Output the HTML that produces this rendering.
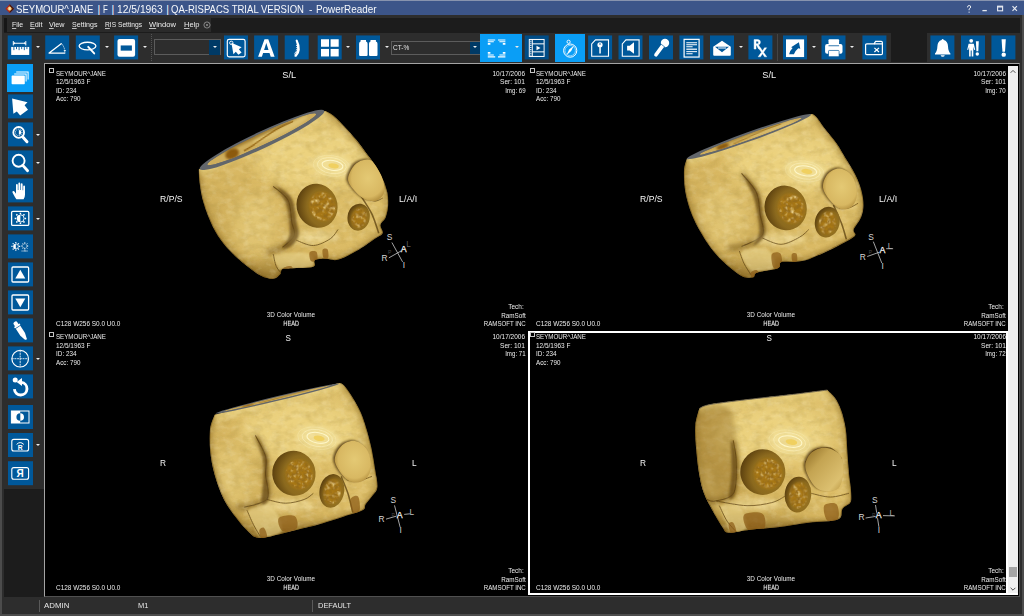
<!DOCTYPE html>
<html><head><meta charset="utf-8">
<style>
*{box-sizing:border-box;margin:0;padding:0}
html,body{width:1024px;height:616px;overflow:hidden;background:#2d2d2d;font-family:"Liberation Sans",sans-serif;}
.abs{position:absolute}
.tx{position:absolute;white-space:nowrap}
.tx u{text-decoration:underline;text-underline-offset:0.8px;text-decoration-thickness:0.6px;text-decoration-color:#bdbdbd}
.sx{display:inline-block;transform-origin:0 50%;white-space:nowrap}
#title{left:0;top:0;width:1024px;height:15px;background:#3c5589;border-top:1px solid #8793ae;}
#title .t{position:absolute;left:16px;top:0.5px;font-size:10.3px;color:#f4f6fa;white-space:nowrap;line-height:13px;transform-origin:0 50%;transform:scaleX(0.957)}
.mi{position:absolute;top:18.7px;font-size:7.6px;color:#e8e8e8;line-height:10px;white-space:nowrap;transform-origin:0 50%}
.mi u{text-decoration:underline;text-underline-offset:0.6px;text-decoration-thickness:0.7px}
.tb{position:absolute;left:0;top:0;width:24.4px;height:24.4px;background:#00589a;overflow:hidden}
.sb{position:absolute;left:0;top:0;width:24.5px;height:24.3px;background:#00589a;overflow:hidden}
.dd{position:absolute;width:0;height:0;border-left:2px solid transparent;border-right:2px solid transparent;border-top:2.4px solid #ececec}
.tb svg,.sb svg{position:absolute;left:0;top:0;width:24.5px;height:24px}
.vt{position:absolute;font-size:6.25px;line-height:8.6px;color:#e8e8e8;white-space:nowrap}
.vt.r{text-align:right}
.vt.c{text-align:center}
.sq{position:absolute;width:5px;height:5px;border:1px solid #c4c4c4}
.ori{position:absolute;font-size:8.6px;color:#f2f2f2;line-height:10px;white-space:nowrap}
.st{position:absolute;top:601.3px;font-size:7.9px;color:#e4e4e4;line-height:10px}
.cube{position:absolute;font-size:8px;color:#e8e8e8}
</style></head><body>
<div id="title" class="abs"></div>

<div class="tx" style="left:16.1px;transform-origin:0 50%;top:3.51px;font-size:10.5px;line-height:10.5px;color:#f6f8fb;transform:scaleX(0.911);">SEYMOUR^JANE</div>
<div class="tx" style="left:97.6px;transform-origin:0 50%;top:3.51px;font-size:10.5px;line-height:10.5px;color:#f6f8fb;transform:scaleX(1.000);">|</div>
<div class="tx" style="left:103px;transform-origin:0 50%;top:3.51px;font-size:10.5px;line-height:10.5px;color:#f6f8fb;transform:scaleX(0.748);">F</div>
<div class="tx" style="left:111.4px;transform-origin:0 50%;top:3.51px;font-size:10.5px;line-height:10.5px;color:#f6f8fb;transform:scaleX(1.000);">|</div>
<div class="tx" style="left:116.7px;transform-origin:0 50%;top:3.51px;font-size:10.5px;line-height:10.5px;color:#f6f8fb;transform:scaleX(0.980);">12/5/1963</div>
<div class="tx" style="left:166.2px;transform-origin:0 50%;top:3.51px;font-size:10.5px;line-height:10.5px;color:#f6f8fb;transform:scaleX(1.000);">|</div>
<div class="tx" style="left:171.2px;transform-origin:0 50%;top:3.51px;font-size:10.5px;line-height:10.5px;color:#f6f8fb;transform:scaleX(0.909);">QA-RISPACS TRIAL VERSION</div>
<div class="tx" style="left:308.6px;transform-origin:0 50%;top:3.51px;font-size:10.5px;line-height:10.5px;color:#f6f8fb;transform:scaleX(0.972);">-</div>
<div class="tx" style="left:315.5px;transform-origin:0 50%;top:3.51px;font-size:10.5px;line-height:10.5px;color:#f6f8fb;transform:scaleX(0.942);">PowerReader</div>

<svg class="abs" style="left:5.400px;top:3.600px" width="9.400" height="9.400" viewBox="0 0 12 12"><path d="M6 .4L11.600 6 6 11.600.4 6z" fill="#b3261a"/><path d="M6 .4L11.600 6 6 11.600z" fill="#3a1410"/><path d="M6 2.400L9.400 6 6 9.600 2.600 6z" fill="#e08a30"/><path d="M4.400 4h3v3.600h-3z" fill="#f6e2b0"/></svg>
<svg class="abs" style="left:960px;top:2px" width="62" height="13" viewBox="0 0 62 13"><g fill="none" stroke="#e6e9f0" stroke-width="1">
<path d="M7.500 5.400q0-1.900 1.600-1.900t1.600 1.500q0 1-1.600 2v1.200M9.100 9.600v1.200"/>
<path d="M22.400 8.600h4.400" stroke-width="1.300"/><rect x="37.600" y="4.200" width="5" height="4.600" stroke-width="1.100"/><path d="M37.600 4.800h5" stroke-width="1.400"/>
<path d="M52.500 4.200l4.400 4.600M56.900 4.200l-4.400 4.600" stroke-width="1.200"/></g></svg>
<div class="abs" style="left:0;top:15px;width:1.500px;height:601px;background:#4c4c4c"></div>
<div class="abs" style="left:1022px;top:15px;width:2px;height:601px;background:#4c4c4c"></div>
<div class="abs" style="left:0;top:613.500px;width:1024px;height:2.500px;background:#4c4c4c"></div>
<div class="abs" style="left:4px;top:17.500px;width:1016px;height:15px;background:#1c1c1c"></div>
<div class="abs" style="left:891px;top:32px;width:35.500px;height:30px;background:#1c1c1c"></div>
<div class="abs" style="left:7px;top:17.500px;width:204px;height:14.500px;background:#2a2a2a"></div>
<div class="abs" style="left:4px;top:18px;width:2.500px;height:14px;background:#161616"></div>

<div class="tx" style="left:12px;transform-origin:0 50%;top:21.10px;font-size:7.8px;line-height:7.8px;color:#ececec;transform:scaleX(0.891);"><u>F</u>ile</div>
<div class="tx" style="left:30px;transform-origin:0 50%;top:21.10px;font-size:7.8px;line-height:7.8px;color:#ececec;transform:scaleX(0.930);"><u>E</u>dit</div>
<div class="tx" style="left:49px;transform-origin:0 50%;top:21.10px;font-size:7.8px;line-height:7.8px;color:#ececec;transform:scaleX(0.925);"><u>V</u>iew</div>
<div class="tx" style="left:72px;transform-origin:0 50%;top:21.10px;font-size:7.8px;line-height:7.8px;color:#ececec;transform:scaleX(0.905);"><u>S</u>ettings</div>
<div class="tx" style="left:105px;transform-origin:0 50%;top:21.10px;font-size:7.8px;line-height:7.8px;color:#ececec;transform:scaleX(0.853);"><u>R</u>IS Settings</div>
<div class="tx" style="left:149px;transform-origin:0 50%;top:21.10px;font-size:7.8px;line-height:7.8px;color:#ececec;transform:scaleX(0.973);"><u>W</u>indow</div>
<div class="tx" style="left:183.5px;transform-origin:0 50%;top:21.10px;font-size:7.8px;line-height:7.8px;color:#ececec;transform:scaleX(0.966);"><u>H</u>elp</div>
<svg class="abs" style="left:203px;top:20.500px" width="8" height="8" viewBox="0 0 8 8"><circle cx="4" cy="4" r="3.100" fill="none" stroke="#9a9a9a" stroke-width="0.800"/><path d="M2.800 2.800l2.400 2.400M5.200 2.800L2.800 5.200" stroke="#9a9a9a" stroke-width="0.700"/></svg>
<div class="tb" style="transform:translate(7.7px,35.45px)"><svg viewBox="0 0 24.500 24"><path d="M5.6 5.6v4.4M18.1 5.6v4.4M5.6 7.8H18.1" stroke="#fff" stroke-width="1" fill="none"/>
<path d="M7.2 6.6L5.8 7.8l1.4 1.2zM16.5 6.6l1.4 1.2-1.4 1.2z" fill="#fff"/>
<rect x="3.5" y="11.5" width="18" height="8" fill="#fff"/>
<path d="M6.2 11.5v3.2M8.8 11.5v2.2M11.4 11.5v3.2M14 11.5v2.2M16.6 11.5v3.2M19.2 11.5v2.2" stroke="#00589a" stroke-width="0.9"/></svg></div>
<div class="dd" style="left:35.5px;top:45.8px"></div>
<div class="tb" style="transform:translate(45.2px,35.45px)"><svg viewBox="0 0 24.500 24"><path d="M3.9 17.6L16 8.2M3.9 17.6H19.6" stroke="#fff" stroke-width="1.3" fill="none" stroke-linecap="round"/>
<path d="M16.3 8.3Q19.6 11.5 19.7 17" stroke="#fff" stroke-width="1" fill="none" stroke-dasharray="1.2 1.1"/>
<path d="M18.3 14.8h2.6l-1.3 1.8z" fill="#fff"/></svg></div>
<div class="tb" style="transform:translate(75.8px,35.45px)"><svg viewBox="0 0 24.500 24"><ellipse cx="11.7" cy="10.6" rx="8.4" ry="3.8" fill="none" stroke="#fff" stroke-width="1.3"/>
<path d="M12.4 11.4L18.4 18" stroke="#fff" stroke-width="1.9" stroke-linecap="round"/></svg></div>
<div class="dd" style="left:104.5px;top:45.8px"></div>
<div class="tb" style="transform:translate(114.1px,35.45px)"><svg viewBox="0 0 24.500 24"><rect x="3.4" y="3.6" width="17.6" height="17.6" rx="2" fill="#fff"/><rect x="6.6" y="10" width="11.2" height="5.2" fill="#00589a"/></svg></div>
<div class="dd" style="left:142.8px;top:45.8px"></div>
<div class="abs" style="left:151.300px;top:34px;width:0;height:27px;border-left:1px dotted #555"></div>
<div class="abs" style="left:153.800px;top:39.200px;width:66.800px;height:16.300px;border:1px solid #5c5c5c;background:#2d2d2d"></div>
<div class="abs" style="left:209.200px;top:40px;width:10.800px;height:14.800px;background:#003a66"></div>
<div class="dd" style="left:213px;top:46.099999999999994px"></div>
<div class="tb" style="transform:translate(224px,35.45px)"><svg viewBox="0 0 24.500 24"><rect x="3.3" y="4" width="17.8" height="17.4" rx="1.8" fill="none" stroke="#fff" stroke-width="1.2"/>
<path d="M7.4 7.2L17.6 11.8 14.8 13.8 17.6 17 14.4 19.4 11.8 16.2 9.4 18.8z" fill="#fff"/>
<circle cx="7.3" cy="7.4" r="1.7" fill="none" stroke="#fff" stroke-width="0.9"/></svg></div>
<div class="tb" style="transform:translate(254.1px,35.45px)"><svg viewBox="0 0 24.500 24"><path d="M4 21.2L10.4 3.8h3.8L20.5 21.2h-3.9l-1.2-3.7H9l-1.2 3.7zM10 14.5h4.4l-2.2-6.9z" fill="#fff" fill-rule="evenodd"/></svg></div>
<div class="tb" style="transform:translate(284.7px,35.45px)"><svg viewBox="0 0 24.500 24"><path d="M11.4 4.2q1-.6 1.5.4 2.6 5.4 2.2 9.600-.4 4-3 6.600-.8.800-1.800.400l-.8-.7q2.600-2.600 3-6.300.400-4.200-1.600-9.200z" fill="#fff"/>
<path d="M13.4 9.600l-2 .5M13.800 11.600l-2.200.5M13.900 13.600l-2.400.4M13.600 15.600l-2.600.2M13 17.400l-2.800-.2M12 19l-2.600-.6" stroke="#fff" stroke-width="0.9"/></svg></div>
<div class="tb" style="transform:translate(317.7px,35.45px)"><svg viewBox="0 0 24.500 24"><rect x="3.3" y="3.8" width="8" height="7.5" fill="#fff"/><rect x="12.9" y="3.8" width="8.1" height="7.5" fill="#fff"/><rect x="3.3" y="13.5" width="8" height="7.5" fill="#fff"/><rect x="12.9" y="13.5" width="8.1" height="7.5" fill="#fff"/></svg></div>
<div class="dd" style="left:346.4px;top:45.8px"></div>
<div class="tb" style="transform:translate(356px,35.45px)"><svg viewBox="0 0 24.500 24"><path d="M4.6 4.5h5.4v1.6q1.6.6 1.6 2.2v11.2q0 1.1-1.1 1.1H4.2q-1.1 0-1.1-1.1V8.3q0-1.6 1.5-2.2z" fill="#fff"/>
<path d="M14.5 4.5h5.4v1.6q1.6.6 1.6 2.2v11.2q0 1.1-1.1 1.1h-6.3q-1.1 0-1.1-1.1V8.3q0-1.6 1.5-2.2z" fill="#fff"/></svg></div>
<div class="dd" style="left:384.6px;top:45.8px"></div>
<div class="abs" style="left:391.200px;top:40.800px;width:88.600px;height:14px;border:1px solid #5c5c5c;background:#2d2d2d"></div>
<div class="abs" style="left:470px;top:41.500px;width:9.600px;height:12.600px;background:#003a66"></div>
<div class="dd" style="left:473px;top:46.099999999999994px"></div>
<div class="tx" style="left:393.3px;transform-origin:0 50%;top:44.04px;font-size:7.4px;line-height:7.4px;color:#e4e4e4;transform:scaleX(0.881);">CT-%</div>
<div class="abs" style="left:480px;top:33.600px;width:42px;height:28.200px;background:#0a9ef6"><svg style="position:absolute;left:0;top:0" width="42" height="28.200" viewBox="0 0 42 28.200"><g fill="#fff"><path d="M7.8 5.4h7.4v1.1H7.8zM7.8 7.2h6v1.1h-6zM7.8 9h2.6v1.8H7.8z"/>
<path d="M25.4 5.4H18v1.1h7.4zM25.4 7.2h-6v1.1h6zM25.4 9h-2.6v1.8h2.6z"/>
<path d="M7.8 23.4h7.4v-1.1H7.8zM7.8 21.6h6v-1.1h-6zM7.8 19.8h2.6V18H7.8z"/>
<path d="M25.4 23.4H18v-1.1h7.4zM25.4 21.6h-6v-1.1h6zM25.4 19.8h-2.6V18h2.6z"/></g></svg></div>
<div class="dd" style="left:515px;top:46.099999999999994px"></div>
<div class="tb" style="transform:translate(524.7px,35.45px);background:#004c86"><svg viewBox="0 0 24.500 24"><rect x="4.6" y="4" width="14.8" height="17" fill="none" stroke="#fff" stroke-width="1"/>
<path d="M7.6 4v17M7.6 8.4h11.8M7.6 16.4h11.8" stroke="#fff" stroke-width="1" fill="none"/>
<path d="M6.1 5.2v15" stroke="#fff" stroke-width="1.2" stroke-dasharray="1.1 1"/>
<path d="M11.8 10.3l4 2.2-4 2.2z" fill="#fff"/></svg></div>
<div class="abs" style="left:554.600px;top:33.600px;width:30.400px;height:28.200px;background:#0a9ef6"><svg style="position:absolute;left:0;top:0" width="30.400" height="28.200" viewBox="0 0 30.400 28.200"><circle cx="15.2" cy="16.6" r="6.6" fill="none" stroke="#fff" stroke-width="1"/>
<circle cx="15.2" cy="16.6" r="5.2" fill="none" stroke="#fff" stroke-width="0.5"/>
<circle cx="13.6" cy="7.8" r="1.6" fill="none" stroke="#fff" stroke-width="0.9"/>
<path d="M11.4 21.2l2.8-5.6 4.8-4.2-2.8 5.6z" fill="#fff"/></svg></div>
<div class="tb" style="transform:translate(588.1px,35.45px)"><svg viewBox="0 0 24.500 24"><path d="M7.4 4.4H20.4V20.8H3.6V8.4z" fill="none" stroke="#fff" stroke-width="1.1"/>
<circle cx="11.9" cy="9.3" r="2.6" fill="#fff"/><circle cx="11.9" cy="8.6" r="0.8" fill="#00589a"/>
<path d="M11.2 11h1.5v7h-1.5z" fill="#fff"/></svg></div>
<div class="tb" style="transform:translate(618.5px,35.45px)"><svg viewBox="0 0 24.500 24"><path d="M7.4 4.4H20.6V20.8H3.8V8.4z" fill="none" stroke="#fff" stroke-width="1.1"/>
<path d="M8.6 10.2h2.6l4.3-3.4v11.6l-4.3-3.4H8.6z" fill="#fff"/></svg></div>
<div class="tb" style="transform:translate(649px,35.45px)"><svg viewBox="0 0 24.500 24"><path d="M14.3 9.4L7 19.300" stroke="#fff" stroke-width="3.700" stroke-linecap="round"/><circle cx="16" cy="7.600" r="4.200" fill="#fff"/>
<path d="M11.800 8.400l4.200 3.400" stroke="#00589a" stroke-width="0.700"/></svg></div>
<div class="tb" style="transform:translate(679.4px,35.45px)"><svg viewBox="0 0 24.500 24"><rect x="4.700" y="3.900" width="15" height="17.700" fill="none" stroke="#fff" stroke-width="1.200"/>
<path d="M6.900 7.300h10.700M6.900 9.300h10.700M6.900 11.300h6.300M6.900 16.200h10.700M6.900 18.300h6.300" stroke="#fff" stroke-width="1"/><path d="M6.900 13.800h10.700" stroke="#cfe0ee" stroke-width="1.500"/></svg></div>
<div class="tb" style="transform:translate(710px,35.45px)"><svg viewBox="0 0 24.500 24"><path d="M3.200 11.300L12 5.200l8.800 6.100v8q0 1-1 1H4.200q-1 0-1-1z" fill="#fff"/>
<path d="M5 11.400h14l-7 5.300z" fill="#00589a"/><rect x="8" y="11.800" width="8" height="1.500" fill="#a9c8e2"/></svg></div>
<div class="dd" style="left:738.6px;top:45.8px"></div>
<div class="tb" style="transform:translate(748.4px,35.45px)"><svg viewBox="0 0 24.500 24"><path d="M5.700 13.600V4.100h3.500q2.800 0 2.800 2.700 0 2.100-2 2.600l2.500 4.200h-2.200l-2.200-3.900h-.5v3.900zM7.600 5.700v2.500h1.500q1 0 1-1.250t-1-1.250z" fill="#fff" fill-rule="evenodd" stroke="#fff" stroke-width="0.45"/>
<path d="M9.900 12.300h2.200l2 3 2-3h2.200l-3.100 4.500 3.200 4.600h-2.300l-2-3.100-2 3.100H9.700l3.300-4.600z" fill="#fff" stroke="#fff" stroke-width="0.35"/></svg></div>
<div class="abs" style="left:777.200px;top:34px;width:1.200px;height:27px;background:#444"></div>
<div class="tb" style="transform:translate(783px,35.45px)"><svg viewBox="0 0 24.500 24"><rect x="3" y="3.900" width="18.100" height="17.700" fill="#fff"/>
<path d="M6.100 18.700Q7.400 14.600 9.600 12.600L8.100 11.700 15.900 6.800 17.300 13.400 15.300 12.900Q12.600 15 10.900 18.700z" fill="#00589a"/></svg></div>
<div class="dd" style="left:811.8px;top:45.8px"></div>
<div class="tb" style="transform:translate(821.5px,35.45px)"><svg viewBox="0 0 24.500 24"><rect x="7" y="3.8" width="10.6" height="5" rx="1" fill="#fff"/>
<rect x="3.6" y="8.6" width="17.4" height="9.6" rx="2" fill="#fff"/>
<rect x="7" y="15" width="10.6" height="6.2" rx="0.8" fill="#fff" stroke="#00589a" stroke-width="0.7"/>
<path d="M7 10.3h10.6" stroke="#00589a" stroke-width="0.8"/></svg></div>
<div class="dd" style="left:850.2px;top:45.8px"></div>
<div class="tb" style="transform:translate(862.4px,35.45px)"><svg viewBox="0 0 24.500 24"><path d="M4.4 8.4H11.6l1.6-2.4h5.6q1.2 0 1.2 1.2V18q0 1.2-1.2 1.2H4.4q-1.2 0-1.2-1.2V9.6q0-1.2 1.2-1.2z" fill="none" stroke="#fff" stroke-width="1.2"/>
<path d="M11.6 8.4H20" stroke="#fff" stroke-width="1.1"/>
<path d="M12 12.4l4.6 4.2M16.6 12.4L12 16.6" stroke="#fff" stroke-width="1.2"/></svg></div>
<div class="tb" style="transform:translate(930.4px,35.45px)"><svg viewBox="0 0 24.500 24"><path d="M12.2 3.6q.9 0 1.2 1 4 1.2 4.2 6.2.2 5 2.4 7.2v1H4.6v-1q2.2-2.2 2.4-7.2.2-5 4.2-6.2.3-1 1-1z" fill="#fff"/>
<path d="M10.2 19.8h4.2q-.4 1.6-2.1 1.6t-2.1-1.6z" fill="#fff"/></svg></div>
<div class="tb" style="transform:translate(961px,35.45px)"><svg viewBox="0 0 24.500 24"><circle cx="10.2" cy="5.4" r="1.9" fill="#fff"/>
<path d="M7.6 8.2h5.2l1.4 6-1 .4-.9-3.2V21h-1.6v-6h-1v6H8.1v-9.6l-.9 3.2-1-.4z" fill="#fff"/>
<path d="M14.9 5.8h2.9l-.5 10h-1.9z" fill="#fff"/><circle cx="16.3" cy="18.6" r="1.7" fill="#fff"/></svg></div>
<div class="tb" style="transform:translate(991.4px,35.45px)"><svg viewBox="0 0 24.500 24"><path d="M10.2 3.8h4.2l-.8 12.4h-2.6z" fill="#fff"/><circle cx="12.3" cy="19.2" r="2.2" fill="#fff"/></svg></div>
<div class="abs" style="left:7.200px;top:64.200px;width:25.800px;height:28px;background:#0a9ef6"><svg style="position:absolute;left:0.600px;top:2px" width="24.500" height="24" viewBox="0 0 24.500 24"><g fill="#fff"><path d="M8.2 5.4H20.6V13.6H19.6V6.4H8.2z"/><path d="M6.2 7.4H18.6V15.6H17.6V8.4H6.2z"/><rect x="3.6" y="9.6" width="13.2" height="8.6" rx="0.8"/></g></svg></div>
<div class="sb" style="transform:translate(8px,94.4px)"><svg viewBox="0 0 24.500 24"><path d="M4.100 4.100L19.500 7.800 16.600 10.800 20 15.400 12.200 21.200 8.800 17 5.400 19.300z" fill="#fff"/></svg></div>
<div class="sb" style="transform:translate(8px,122.4px)"><svg viewBox="0 0 24.500 24"><circle cx="10.700" cy="10" r="5.400" fill="none" stroke="#fff" stroke-width="1.800"/>
<path d="M15 14.800l4 4.600" stroke="#fff" stroke-width="2.900" stroke-linecap="round"/>
<path d="M10.900 7.600a2.400 2.400 0 0 1 0 4.800z" fill="#fff"/><circle cx="10.700" cy="10" r="3.300" fill="none" stroke="#fff" stroke-width="0.900" stroke-dasharray="0.900 0.900"/></svg></div>
<div class="dd" style="left:35.5px;top:133.50000000000003px"></div>
<div class="sb" style="transform:translate(8px,150.4px)"><svg viewBox="0 0 24.500 24"><circle cx="10.6" cy="10.4" r="6" fill="none" stroke="#fff" stroke-width="1.9"/>
<path d="M14.8 15l4.8 5.4" stroke="#fff" stroke-width="2.8" stroke-linecap="round"/></svg></div>
<div class="dd" style="left:35.5px;top:161.50000000000003px"></div>
<div class="sb" style="transform:translate(8px,178.4px)"><svg viewBox="0 0 24.500 24"><path d="M8.4 20.8q-1.6-2-3.8-6.4-.6-1.4.4-1.8 1-.3 1.8 1l1.2 1.8V6.6q0-1 .9-1t.9 1v5h.6V5q0-1 .9-1t.9 1v6.6h.6V5.8q0-1 .9-1t.9 1v6h.6V8q0-1 .9-1t.9 1v8.4q0 2.400-1.400 4.400z" fill="#fff"/></svg></div>
<div class="sb" style="transform:translate(8px,206.4px)"><svg viewBox="0 0 24.500 24"><rect x="3.600" y="5" width="17.200" height="14" rx="1.200" fill="none" stroke="#fff" stroke-width="1.300"/>
<path d="M12.400 8.300a3.700 3.700 0 0 0 0 7.400z" fill="#fff"/><path d="M12.400 8.300a3.700 3.700 0 0 1 0 7.400" fill="none" stroke="#fff" stroke-width="0.900"/>
<path d="M12.400 6.300v1.500M12.400 16.200v1.500M6.700 12h1.500M16.600 12h1.500M8.300 7.900l1.100 1.100M15.400 15l1.100 1.100M16.500 7.900l-1.100 1.100M9.400 15l-1.100 1.100" stroke="#fff" stroke-width="1.500"/></svg></div>
<div class="dd" style="left:35.5px;top:217.50000000000003px"></div>
<div class="sb" style="transform:translate(8px,234.4px)"><svg viewBox="0 0 24.500 24"><path d="M7.800 9.400a2.600 2.600 0 0 0 0 5.200z" fill="#fff"/><path d="M7.800 9.400a2.600 2.600 0 0 1 0 5.200" fill="none" stroke="#fff" stroke-width="0.800"/>
<path d="M7.800 7.600v1.200M7.800 15.200v1.200M3.400 12h1.200M11 12h1.200M4.700 8.900l.9.900M10 14.200l.9.900M10.900 8.900l-.9.900M5.600 14.200l-.9.900" stroke="#fff" stroke-width="1.200"/>
<circle cx="16.800" cy="11.600" r="2.300" fill="none" stroke="#fff" stroke-width="1" stroke-dasharray="0.900 0.600"/><path d="M16.800 7.600v1M13.200 11.600h1M19.400 11.600h1M14.200 9l.7.700M19.400 9l-.7.700M14.200 14.200l.7-.7M19.400 14.200l-.7-.7M16.800 14v2.400M13.600 16.600h6.400" stroke="#fff" stroke-width="0.900" stroke-dasharray="0.800 0.400"/></svg></div>
<div class="sb" style="transform:translate(8px,262.4px)"><svg viewBox="0 0 24.500 24"><rect x="4" y="4.600" width="16.600" height="15" rx="1" fill="none" stroke="#fff" stroke-width="1.300"/><path d="M12.300 7.400l5 8.800h-10z" fill="#fff"/></svg></div>
<div class="sb" style="transform:translate(8px,290.4px)"><svg viewBox="0 0 24.500 24"><rect x="4" y="4.600" width="16.600" height="15" rx="1" fill="none" stroke="#fff" stroke-width="1.300"/><path d="M12.300 16.800l5-8.800h-10z" fill="#fff"/></svg></div>
<div class="sb" style="transform:translate(8px,318.4px)"><svg viewBox="0 0 24.500 24"><g transform="translate(12.500 12.600) rotate(-33)" fill="#fff"><rect x="-2.100" y="-10.800" width="4.200" height="4.400" rx="1.500"/><rect x="-3.300" y="-7" width="6.600" height="1.900" rx=".5"/><path d="M-2.700 -4.500h5.400v8.400l-1.500 5.600-1.200 1.300-1.200-1.300-1.500-5.600z"/></g></svg></div>
<div class="sb" style="transform:translate(8px,346.4px)"><svg viewBox="0 0 24.500 24"><circle cx="12.200" cy="12.300" r="8.300" fill="none" stroke="#fff" stroke-width="1.200"/><path d="M12.200 3.800v17M3.700 12.300h17" stroke="#cfe0ee" stroke-width="1" stroke-dasharray="2 0.700"/></svg></div>
<div class="dd" style="left:35.5px;top:357.5px"></div>
<div class="sb" style="transform:translate(8px,374.4px)"><svg viewBox="0 0 24.500 24"><path d="M6.400 14.800A6.300 6.300 0 1 0 13.400 8" fill="none" stroke="#fff" stroke-width="2.900"/><path d="M14 3.600v8L8.600 7.600z" fill="#fff"/><circle cx="7.200" cy="5.700" r="2.500" fill="#fff"/></svg></div>
<div class="sb" style="transform:translate(8px,405px)"><svg viewBox="0 0 24.500 24"><rect x="3.400" y="6" width="17.600" height="12" fill="none" stroke="#fff" stroke-width="1"/><rect x="3.400" y="6" width="8.800" height="12" fill="#fff"/>
<path d="M12.200 8.200a3.800 3.800 0 0 1 0 7.600z" fill="#fff"/><path d="M12.200 8.200a3.800 3.800 0 0 0 0 7.600z" fill="#00589a"/></svg></div>
<div class="sb" style="transform:translate(8px,433px)"><svg viewBox="0 0 24.500 24"><rect x="3.800" y="6.400" width="16.800" height="11.600" rx="2" fill="none" stroke="#fff" stroke-width="1.100"/>
<path d="M8.600 11.400q3.600-3.600 7.200 0" fill="none" stroke="#fff" stroke-width="1"/>
<text x="9.700" y="17.200" font-family="Liberation Sans" font-weight="bold" font-size="6.800" fill="#fff">R</text></svg></div>
<div class="dd" style="left:35.5px;top:444.1px"></div>
<div class="sb" style="transform:translate(8px,461.2px)"><svg viewBox="0 0 24.500 24"><rect x="3.800" y="6.400" width="16.800" height="11.600" rx="2" fill="none" stroke="#fff" stroke-width="1.100"/>
<text x="8.600" y="16" font-family="Liberation Sans" font-weight="bold" font-size="10" fill="#fff">Я</text></svg></div>
<div class="abs" style="left:4px;top:488.500px;width:39.500px;height:108px;background:#1c1c1c"></div>
<div class="abs" style="left:44px;top:62.900px;width:976.200px;height:534px;background:#000;border:1.500px solid #a4a4a4;border-bottom:1px solid #505050;border-right:1px solid #505050"></div>
<svg class="abs" style="left:0;top:0" width="1024" height="616" viewBox="0 0 1024 616">
<defs>
<linearGradient id="gbody" x1="0" y1="1" x2="1" y2="0"><stop offset="0" stop-color="#c6a450"/><stop offset=".5" stop-color="#dcbc66"/><stop offset="1" stop-color="#e0c470"/></linearGradient>
<radialGradient id="gsock" cx=".68" cy=".6" r=".75"><stop offset="0" stop-color="#9c7824"/><stop offset=".6" stop-color="#8c6a1e"/><stop offset="1" stop-color="#52380c"/></radialGradient>
<radialGradient id="geyeR" cx=".55" cy=".45" r=".6"><stop offset="0" stop-color="#e4c974"/><stop offset=".75" stop-color="#d8b862"/><stop offset="1" stop-color="#b08c3c"/></radialGradient>
<linearGradient id="geyeR2" x1="0" y1="0" x2="1" y2="1"><stop offset="0" stop-color="#8c6a22"/><stop offset=".35" stop-color="#c4a452"/><stop offset=".8" stop-color="#dcc070"/><stop offset="1" stop-color="#b8943e"/></linearGradient>
<filter id="tex" x="0" y="0" width="100%" height="100%"><feTurbulence type="fractalNoise" baseFrequency="0.075" numOctaves="2" seed="7" result="n"/><feColorMatrix in="n" type="matrix" values="0 0 0 0 0.90  0 0 0 0 0.72  0 0 0 0 0.32  3.4 0 0 0 -1.75" result="c"/><feTurbulence type="fractalNoise" baseFrequency="0.09" numOctaves="2" seed="21" result="n2"/><feColorMatrix in="n2" type="matrix" values="0 0 0 0 0.30  0 0 0 0 0.15  0 0 0 0 0.01  0 3.6 0 0 -1.45" result="d"/><feMerge result="m"><feMergeNode in="c"/><feMergeNode in="d"/></feMerge><feComposite in="m" in2="SourceGraphic" operator="in"/></filter>
<filter id="mot" x="0" y="0" width="100%" height="100%"><feTurbulence type="fractalNoise" baseFrequency="0.03 0.045" numOctaves="3" seed="11" result="n"/><feColorMatrix in="n" type="matrix" values="0 0 0 0 0.42  0 0 0 0 0.29  0 0 0 0 0.06  0 0 2.2 0 -0.95"/></filter>
<filter id="mot2" x="0" y="0" width="100%" height="100%"><feTurbulence type="fractalNoise" baseFrequency="0.035 0.05" numOctaves="3" seed="5" result="n"/><feColorMatrix in="n" type="matrix" values="0 0 0 0 0.98  0 0 0 0 0.92  0 0 0 0 0.68  0 2.2 0 0 -1.0"/></filter>
<filter id="bl20" x="-50%" y="-50%" width="200%" height="200%"><feGaussianBlur stdDeviation="22"/></filter>
<filter id="bl14" x="-50%" y="-50%" width="200%" height="200%"><feGaussianBlur stdDeviation="14"/></filter>
<filter id="bl8" x="-50%" y="-50%" width="200%" height="200%"><feGaussianBlur stdDeviation="8"/></filter>
<filter id="bl4" x="-50%" y="-50%" width="200%" height="200%"><feGaussianBlur stdDeviation="4"/></filter>
<filter id="bl2" x="-50%" y="-50%" width="200%" height="200%"><feGaussianBlur stdDeviation="1.6"/></filter>
</defs>
<g transform="translate(190,100) scale(0.30836)">
<defs><clipPath id="cpa"><path d="M28.0 225.0C28.3 230.8 28.0 244.2 30.0 260.0C32.0 275.8 35.0 300.0 40.0 320.0C45.0 340.0 51.7 360.0 60.0 380.0C68.3 400.0 78.3 421.7 90.0 440.0C101.7 458.3 115.0 474.2 130.0 490.0C145.0 505.8 163.3 521.7 180.0 535.0C196.7 548.3 215.0 562.5 230.0 570.0C245.0 577.5 259.7 580.7 270.0 580.0C280.3 579.3 287.0 571.3 292.0 566.0C297.0 560.7 293.7 551.3 300.0 548.0C306.3 544.7 313.3 547.2 330.0 546.0C346.7 544.8 387.5 545.3 400.0 541.0C412.5 536.7 398.3 524.3 405.0 520.0C411.7 515.7 427.5 515.3 440.0 515.0C452.5 514.7 463.3 522.2 480.0 518.0C496.7 513.8 520.0 501.3 540.0 490.0C560.0 478.7 585.8 459.7 600.0 450.0C614.2 440.3 622.0 439.5 625.0 432.0C628.0 424.5 616.3 413.7 618.0 405.0C619.7 396.3 630.8 390.8 635.0 380.0C639.2 369.2 642.2 353.3 643.0 340.0C643.8 326.7 643.0 314.2 640.0 300.0C637.0 285.8 631.7 270.0 625.0 255.0C618.3 240.0 609.2 224.2 600.0 210.0C590.8 195.8 580.0 183.3 570.0 170.0C560.0 156.7 551.7 144.2 540.0 130.0C528.3 115.8 512.5 98.3 500.0 85.0C487.5 71.7 475.3 58.3 465.0 50.0C454.7 41.7 442.5 37.5 438.0 35.0z"/></clipPath></defs>
<g clip-path="url(#cpa)">
<path d="M28.0 225.0C28.3 230.8 28.0 244.2 30.0 260.0C32.0 275.8 35.0 300.0 40.0 320.0C45.0 340.0 51.7 360.0 60.0 380.0C68.3 400.0 78.3 421.7 90.0 440.0C101.7 458.3 115.0 474.2 130.0 490.0C145.0 505.8 163.3 521.7 180.0 535.0C196.7 548.3 215.0 562.5 230.0 570.0C245.0 577.5 259.7 580.7 270.0 580.0C280.3 579.3 287.0 571.3 292.0 566.0C297.0 560.7 293.7 551.3 300.0 548.0C306.3 544.7 313.3 547.2 330.0 546.0C346.7 544.8 387.5 545.3 400.0 541.0C412.5 536.7 398.3 524.3 405.0 520.0C411.7 515.7 427.5 515.3 440.0 515.0C452.5 514.7 463.3 522.2 480.0 518.0C496.7 513.8 520.0 501.3 540.0 490.0C560.0 478.7 585.8 459.7 600.0 450.0C614.2 440.3 622.0 439.5 625.0 432.0C628.0 424.5 616.3 413.7 618.0 405.0C619.7 396.3 630.8 390.8 635.0 380.0C639.2 369.2 642.2 353.3 643.0 340.0C643.8 326.7 643.0 314.2 640.0 300.0C637.0 285.8 631.7 270.0 625.0 255.0C618.3 240.0 609.2 224.2 600.0 210.0C590.8 195.8 580.0 183.3 570.0 170.0C560.0 156.7 551.7 144.2 540.0 130.0C528.3 115.8 512.5 98.3 500.0 85.0C487.5 71.7 475.3 58.3 465.0 50.0C454.7 41.7 442.5 37.5 438.0 35.0z" fill="url(#gbody)"/>
<ellipse cx="402" cy="192" rx="190" ry="100" fill="#f0d886" opacity=".75" filter="url(#bl20)"/>
<ellipse cx="210" cy="405" rx="75" ry="100" fill="#ead080" opacity=".6" filter="url(#bl20)"/>
<path d="M28.0 225.0C28.3 230.8 28.0 244.2 30.0 260.0C32.0 275.8 35.0 300.0 40.0 320.0C45.0 340.0 51.7 360.0 60.0 380.0C68.3 400.0 78.3 421.7 90.0 440.0C101.7 458.3 115.0 474.2 130.0 490.0C145.0 505.8 163.3 521.7 180.0 535.0C196.7 548.3 215.0 562.5 230.0 570.0C245.0 577.5 259.7 580.7 270.0 580.0C280.3 579.3 287.0 571.3 292.0 566.0C297.0 560.7 293.7 551.3 300.0 548.0C306.3 544.7 313.3 547.2 330.0 546.0C346.7 544.8 387.5 545.3 400.0 541.0C412.5 536.7 398.3 524.3 405.0 520.0C411.7 515.7 427.5 515.3 440.0 515.0C452.5 514.7 463.3 522.2 480.0 518.0C496.7 513.8 520.0 501.3 540.0 490.0C560.0 478.7 585.8 459.7 600.0 450.0C614.2 440.3 622.0 439.5 625.0 432.0C628.0 424.5 616.3 413.7 618.0 405.0C619.7 396.3 630.8 390.8 635.0 380.0C639.2 369.2 642.2 353.3 643.0 340.0C643.8 326.7 643.0 314.2 640.0 300.0C637.0 285.8 631.7 270.0 625.0 255.0C618.3 240.0 609.2 224.2 600.0 210.0C590.8 195.8 580.0 183.3 570.0 170.0C560.0 156.7 551.7 144.2 540.0 130.0C528.3 115.8 512.5 98.3 500.0 85.0C487.5 71.7 475.3 58.3 465.0 50.0C454.7 41.7 442.5 37.5 438.0 35.0z" fill="none" stroke="#7a5a18" stroke-width="20" opacity=".45" filter="url(#bl8)"/>
<path d="M28.0 225.0C28.3 230.8 28.0 244.2 30.0 260.0C32.0 275.8 35.0 300.0 40.0 320.0C45.0 340.0 51.7 360.0 60.0 380.0C68.3 400.0 78.3 421.7 90.0 440.0C101.7 458.3 115.0 474.2 130.0 490.0C145.0 505.8 163.3 521.7 180.0 535.0C196.7 548.3 215.0 562.5 230.0 570.0C245.0 577.5 259.7 580.7 270.0 580.0C280.3 579.3 287.0 571.3 292.0 566.0C297.0 560.7 293.7 551.3 300.0 548.0C306.3 544.7 313.3 547.2 330.0 546.0C346.7 544.8 387.5 545.3 400.0 541.0C412.5 536.7 398.3 524.3 405.0 520.0C411.7 515.7 427.5 515.3 440.0 515.0C452.5 514.7 463.3 522.2 480.0 518.0C496.7 513.8 520.0 501.3 540.0 490.0C560.0 478.7 585.8 459.7 600.0 450.0C614.2 440.3 622.0 439.5 625.0 432.0C628.0 424.5 616.3 413.7 618.0 405.0C619.7 396.3 630.8 390.8 635.0 380.0C639.2 369.2 642.2 353.3 643.0 340.0C643.8 326.7 643.0 314.2 640.0 300.0C637.0 285.8 631.7 270.0 625.0 255.0C618.3 240.0 609.2 224.2 600.0 210.0C590.8 195.8 580.0 183.3 570.0 170.0C560.0 156.7 551.7 144.2 540.0 130.0C528.3 115.8 512.5 98.3 500.0 85.0C487.5 71.7 475.3 58.3 465.0 50.0C454.7 41.7 442.5 37.5 438.0 35.0z" fill="none" stroke="#5a400e" stroke-width="6" opacity=".5" filter="url(#bl2)"/>
<path d="M438 35L28 225" fill="none" stroke="#e8cf7c" stroke-width="46" opacity=".95" filter="url(#bl8)"/>
<ellipse cx="275.5" cy="585" rx="256.25" ry="50" fill="#745418" opacity=".5" filter="url(#bl20)"/>
<path d="M270.0 280.0C278.0 287.5 308.0 305.8 318.0 325.0C328.0 344.2 326.7 375.8 330.0 395.0C333.3 414.2 343.0 426.2 338.0 440.0C333.0 453.8 314.7 468.8 300.0 478.0C285.3 487.2 258.3 492.2 250.0 495.0" fill="none" stroke="#6e5018" stroke-width="18" opacity=".6" filter="url(#bl8)"/>
<path d="M270.0 280.0C278.0 287.5 308.0 305.8 318.0 325.0C328.0 344.2 326.7 375.8 330.0 395.0C333.3 414.2 343.0 426.2 338.0 440.0C333.0 453.8 306.3 471.7 300.0 478.0" fill="none" stroke="#553a0c" stroke-width="3.5" opacity=".8" filter="url(#bl2)"/>
<ellipse cx="392" cy="445" rx="90" ry="20" fill="#f0dc98" opacity=".7" filter="url(#bl8)"/>
<rect x="18" y="25" width="635" height="565" filter="url(#mot)" opacity=".3"/>
<rect x="18" y="25" width="635" height="565" filter="url(#mot2)" opacity=".22"/>
<g transform="rotate(8 462 212)"><ellipse cx="462" cy="212" rx="64.6" ry="36.8" fill="#f6e8a8" opacity=".55" filter="url(#bl8)"/><ellipse cx="459" cy="214" rx="59.5" ry="33.6" fill="none" stroke="#fdf2bc" stroke-width="2" opacity=".45"/><ellipse cx="460" cy="213" rx="46.919999999999995" ry="25.6" fill="none" stroke="#fff6c8" stroke-width="2.400" opacity=".6"/><ellipse cx="462" cy="212" rx="34" ry="16" fill="none" stroke="#fff8cc" stroke-width="3.500" opacity=".9"/><ellipse cx="466" cy="213" rx="17.0" ry="8.0" fill="#f0d060"/></g>
<path d="M285.0 285.0C288.3 283.3 319.8 300.8 330.0 320.0C340.2 339.2 342.3 380.0 346.0 400.0C349.7 420.0 354.7 428.0 352.0 440.0C349.3 452.0 338.7 465.0 330.0 472.0C321.3 479.0 301.3 487.3 300.0 482.0C298.7 476.7 318.3 457.0 322.0 440.0C325.7 423.0 324.0 398.3 322.0 380.0C320.0 361.7 316.2 345.8 310.0 330.0C303.8 314.2 281.7 286.7 285.0 285.0z" fill="#664a12" opacity=".7" filter="url(#bl4)"/>
<path d="M270.0 505.0C277.5 497.5 310.0 495.8 330.0 495.0C350.0 494.2 379.2 492.5 390.0 500.0C400.8 507.5 410.0 532.0 395.0 540.0C380.0 548.0 318.3 548.0 300.0 548.0C281.7 548.0 290.0 547.2 285.0 540.0C280.0 532.8 262.5 512.5 270.0 505.0z" fill="#ecd890" opacity=".55" filter="url(#bl4)"/>
<path d="M555.0 312.0C560.8 321.7 580.5 350.0 590.0 370.0C599.5 390.0 608.3 421.7 612.0 432.0" fill="none" stroke="#5a3f0e" stroke-width="5" opacity=".75" filter="url(#bl2)"/>
<path d="M572.0 318.0C576.7 319.7 591.2 328.0 600.0 328.0C608.8 328.0 620.8 319.7 625.0 318.0" fill="none" stroke="#5a3f0e" stroke-width="3" opacity=".75" filter="url(#bl2)"/>
<path d="M270.0 500.0C271.7 506.7 275.0 529.0 280.0 540.0C285.0 551.0 296.7 561.7 300.0 566.0" fill="none" stroke="#5a3f0e" stroke-width="3" opacity=".75" filter="url(#bl2)"/>
<path d="M345.0 455.0C354.2 457.8 381.7 472.8 400.0 472.0C418.3 471.2 441.7 458.7 455.0 450.0C468.3 441.3 475.8 425.0 480.0 420.0" fill="none" stroke="#5a3f0e" stroke-width="3" opacity=".75" filter="url(#bl2)"/>
<path d="M300.0 548.0C304.2 541.3 324.2 535.5 330.0 540.0C335.8 544.5 339.2 568.3 335.0 575.0C330.8 581.7 310.8 584.5 305.0 580.0C299.2 575.5 295.8 554.7 300.0 548.0z" fill="#8a5a14" opacity=".7" filter="url(#bl2)"/>
<path d="M388.0 494.0C391.0 489.0 406.0 487.7 410.0 492.0C414.0 496.3 415.0 515.0 412.0 520.0C409.0 525.0 396.0 526.3 392.0 522.0C388.0 517.7 385.0 499.0 388.0 494.0z" fill="#8a5a14" opacity=".7" filter="url(#bl2)"/>
<path d="M430.0 486.0C432.0 481.0 443.0 479.7 446.0 484.0C449.0 488.3 450.0 507.0 448.0 512.0C446.0 517.0 437.0 518.3 434.0 514.0C431.0 509.7 428.0 491.0 430.0 486.0z" fill="#8a5a14" opacity=".7" filter="url(#bl2)"/>
<path d="M515.0 268.0C508.7 253.0 516.5 239.3 522.0 228.0C527.5 216.7 537.0 205.3 548.0 200.0C559.0 194.7 576.3 190.0 588.0 196.0C599.7 202.0 611.0 219.3 618.0 236.0C625.0 252.7 632.3 281.0 630.0 296.0C627.7 311.0 615.7 322.3 604.0 326.0C592.3 329.7 574.8 327.7 560.0 318.0C545.2 308.3 521.3 283.0 515.0 268.0z" fill="#4e360c" opacity=".8" filter="url(#bl4)" transform="translate(-6,-3)"/>
<path d="M515.0 268.0C508.7 253.0 516.5 239.3 522.0 228.0C527.5 216.7 537.0 205.3 548.0 200.0C559.0 194.7 576.3 190.0 588.0 196.0C599.7 202.0 611.0 219.3 618.0 236.0C625.0 252.7 632.3 281.0 630.0 296.0C627.7 311.0 615.7 322.3 604.0 326.0C592.3 329.7 574.8 327.7 560.0 318.0C545.2 308.3 521.3 283.0 515.0 268.0z" fill="url(#geyeR)"/>
<g transform="rotate(-20 412 343)"><ellipse cx="412" cy="343" rx="66" ry="72" fill="url(#gsock)"/><ellipse cx="428" cy="351" rx="40.92" ry="47.52" fill="#a87818" filter="url(#bl4)"/><ellipse cx="428" cy="351" rx="39.6" ry="46.08" fill="#000" filter="url(#tex)" opacity=".9"/></g>
<g transform="rotate(10 547 380)"><ellipse cx="547" cy="380" rx="36" ry="44" fill="url(#gsock)"/><ellipse cx="549" cy="382" rx="23.76" ry="30.799999999999997" fill="#a87818" filter="url(#bl4)"/><ellipse cx="549" cy="382" rx="25.2" ry="32.56" fill="#000" filter="url(#tex)" opacity=".9"/></g>
</g>
<g transform="rotate(-25.1 233.5 129.4)"><ellipse cx="233.5" cy="129.4" rx="223" ry="27.2" fill="#62666b"/><clipPath id="cha"><ellipse cx="233.5" cy="127.4" rx="194.6" ry="18.8"/></clipPath><g clip-path="url(#cha)"><ellipse cx="233.5" cy="127.4" rx="194.6" ry="18.8" fill="#cfae5c"/><ellipse cx="301.61" cy="123.64" rx="97.3" ry="15.040000000000001" fill="#dcc070" filter="url(#bl4)"/><ellipse cx="126.47" cy="129.28" rx="23.351999999999997" ry="16.92" fill="#8c5a10" filter="url(#bl4)"/><path d="M165.39 136.8q38.92 -3.7600000000000002 87.57 -13.16t97.3 -5.64" fill="none" stroke="#9a6a18" stroke-width="4.7" filter="url(#bl2)"/><ellipse cx="233.5" cy="107.66" rx="194.6" ry="9.4" fill="#7a5410" opacity=".55" filter="url(#bl4)"/></g></g>
</g>
<g transform="translate(670,100) scale(0.30836)">
<defs><clipPath id="cpb"><path d="M55.0 190.0C53.3 196.7 45.8 211.7 45.0 230.0C44.2 248.3 45.8 276.7 50.0 300.0C54.2 323.3 61.7 348.3 70.0 370.0C78.3 391.7 88.3 410.0 100.0 430.0C111.7 450.0 125.0 471.7 140.0 490.0C155.0 508.3 174.2 526.3 190.0 540.0C205.8 553.7 221.7 566.2 235.0 572.0C248.3 577.8 262.2 577.0 270.0 575.0C277.8 573.0 268.7 564.8 282.0 560.0C295.3 555.2 337.0 551.7 350.0 546.0C363.0 540.3 351.7 529.5 360.0 526.0C368.3 522.5 386.7 526.0 400.0 525.0C413.3 524.0 423.3 525.0 440.0 520.0C456.7 515.0 480.0 504.2 500.0 495.0C520.0 485.8 543.3 474.2 560.0 465.0C576.7 455.8 594.0 447.5 600.0 440.0C606.0 432.5 592.7 430.0 596.0 420.0C599.3 410.0 614.7 393.3 620.0 380.0C625.3 366.7 628.0 355.0 628.0 340.0C628.0 325.0 624.7 306.7 620.0 290.0C615.3 273.3 608.3 256.7 600.0 240.0C591.7 223.3 580.0 206.7 570.0 190.0C560.0 173.3 551.7 156.7 540.0 140.0C528.3 123.3 510.8 104.2 500.0 90.0C489.2 75.8 481.7 62.5 475.0 55.0C468.3 47.5 462.5 46.7 460.0 45.0z"/></clipPath></defs>
<g clip-path="url(#cpb)">
<path d="M55.0 190.0C53.3 196.7 45.8 211.7 45.0 230.0C44.2 248.3 45.8 276.7 50.0 300.0C54.2 323.3 61.7 348.3 70.0 370.0C78.3 391.7 88.3 410.0 100.0 430.0C111.7 450.0 125.0 471.7 140.0 490.0C155.0 508.3 174.2 526.3 190.0 540.0C205.8 553.7 221.7 566.2 235.0 572.0C248.3 577.8 262.2 577.0 270.0 575.0C277.8 573.0 268.7 564.8 282.0 560.0C295.3 555.2 337.0 551.7 350.0 546.0C363.0 540.3 351.7 529.5 360.0 526.0C368.3 522.5 386.7 526.0 400.0 525.0C413.3 524.0 423.3 525.0 440.0 520.0C456.7 515.0 480.0 504.2 500.0 495.0C520.0 485.8 543.3 474.2 560.0 465.0C576.7 455.8 594.0 447.5 600.0 440.0C606.0 432.5 592.7 430.0 596.0 420.0C599.3 410.0 614.7 393.3 620.0 380.0C625.3 366.7 628.0 355.0 628.0 340.0C628.0 325.0 624.7 306.7 620.0 290.0C615.3 273.3 608.3 256.7 600.0 240.0C591.7 223.3 580.0 206.7 570.0 190.0C560.0 173.3 551.7 156.7 540.0 140.0C528.3 123.3 510.8 104.2 500.0 90.0C489.2 75.8 481.7 62.5 475.0 55.0C468.3 47.5 462.5 46.7 460.0 45.0z" fill="url(#gbody)"/>
<ellipse cx="380" cy="210" rx="190" ry="100" fill="#f0d886" opacity=".75" filter="url(#bl20)"/>
<ellipse cx="172" cy="380" rx="75" ry="100" fill="#ead080" opacity=".6" filter="url(#bl20)"/>
<path d="M55.0 190.0C53.3 196.7 45.8 211.7 45.0 230.0C44.2 248.3 45.8 276.7 50.0 300.0C54.2 323.3 61.7 348.3 70.0 370.0C78.3 391.7 88.3 410.0 100.0 430.0C111.7 450.0 125.0 471.7 140.0 490.0C155.0 508.3 174.2 526.3 190.0 540.0C205.8 553.7 221.7 566.2 235.0 572.0C248.3 577.8 262.2 577.0 270.0 575.0C277.8 573.0 268.7 564.8 282.0 560.0C295.3 555.2 337.0 551.7 350.0 546.0C363.0 540.3 351.7 529.5 360.0 526.0C368.3 522.5 386.7 526.0 400.0 525.0C413.3 524.0 423.3 525.0 440.0 520.0C456.7 515.0 480.0 504.2 500.0 495.0C520.0 485.8 543.3 474.2 560.0 465.0C576.7 455.8 594.0 447.5 600.0 440.0C606.0 432.5 592.7 430.0 596.0 420.0C599.3 410.0 614.7 393.3 620.0 380.0C625.3 366.7 628.0 355.0 628.0 340.0C628.0 325.0 624.7 306.7 620.0 290.0C615.3 273.3 608.3 256.7 600.0 240.0C591.7 223.3 580.0 206.7 570.0 190.0C560.0 173.3 551.7 156.7 540.0 140.0C528.3 123.3 510.8 104.2 500.0 90.0C489.2 75.8 481.7 62.5 475.0 55.0C468.3 47.5 462.5 46.7 460.0 45.0z" fill="none" stroke="#7a5a18" stroke-width="20" opacity=".45" filter="url(#bl8)"/>
<path d="M55.0 190.0C53.3 196.7 45.8 211.7 45.0 230.0C44.2 248.3 45.8 276.7 50.0 300.0C54.2 323.3 61.7 348.3 70.0 370.0C78.3 391.7 88.3 410.0 100.0 430.0C111.7 450.0 125.0 471.7 140.0 490.0C155.0 508.3 174.2 526.3 190.0 540.0C205.8 553.7 221.7 566.2 235.0 572.0C248.3 577.8 262.2 577.0 270.0 575.0C277.8 573.0 268.7 564.8 282.0 560.0C295.3 555.2 337.0 551.7 350.0 546.0C363.0 540.3 351.7 529.5 360.0 526.0C368.3 522.5 386.7 526.0 400.0 525.0C413.3 524.0 423.3 525.0 440.0 520.0C456.7 515.0 480.0 504.2 500.0 495.0C520.0 485.8 543.3 474.2 560.0 465.0C576.7 455.8 594.0 447.5 600.0 440.0C606.0 432.5 592.7 430.0 596.0 420.0C599.3 410.0 614.7 393.3 620.0 380.0C625.3 366.7 628.0 355.0 628.0 340.0C628.0 325.0 624.7 306.7 620.0 290.0C615.3 273.3 608.3 256.7 600.0 240.0C591.7 223.3 580.0 206.7 570.0 190.0C560.0 173.3 551.7 156.7 540.0 140.0C528.3 123.3 510.8 104.2 500.0 90.0C489.2 75.8 481.7 62.5 475.0 55.0C468.3 47.5 462.5 46.7 460.0 45.0z" fill="none" stroke="#5a400e" stroke-width="6" opacity=".5" filter="url(#bl2)"/>
<path d="M460 45L55 190" fill="none" stroke="#e8cf7c" stroke-width="46" opacity=".95" filter="url(#bl8)"/>
<ellipse cx="276.5" cy="580" rx="242.91666666666669" ry="50" fill="#745418" opacity=".5" filter="url(#bl20)"/>
<path d="M232.0 238.0C240.0 248.3 270.0 278.0 280.0 300.0C290.0 322.0 288.7 347.0 292.0 370.0C295.3 393.0 310.0 420.5 300.0 438.0C290.0 455.5 250.3 468.0 232.0 475.0C213.7 482.0 197.0 479.2 190.0 480.0" fill="none" stroke="#6e5018" stroke-width="18" opacity=".6" filter="url(#bl8)"/>
<path d="M232.0 238.0C240.0 248.3 270.0 278.0 280.0 300.0C290.0 322.0 288.7 347.0 292.0 370.0C295.3 393.0 310.0 420.5 300.0 438.0C290.0 455.5 243.3 468.8 232.0 475.0" fill="none" stroke="#553a0c" stroke-width="3.5" opacity=".8" filter="url(#bl2)"/>
<ellipse cx="355" cy="453" rx="90" ry="20" fill="#f0dc98" opacity=".7" filter="url(#bl8)"/>
<rect x="35" y="35" width="603" height="550" filter="url(#mot)" opacity=".3"/>
<rect x="35" y="35" width="603" height="550" filter="url(#mot2)" opacity=".22"/>
<g transform="rotate(8 440 230)"><ellipse cx="440" cy="230" rx="68.39999999999999" ry="36.8" fill="#f6e8a8" opacity=".55" filter="url(#bl8)"/><ellipse cx="437" cy="232" rx="63.0" ry="33.6" fill="none" stroke="#fdf2bc" stroke-width="2" opacity=".45"/><ellipse cx="438" cy="231" rx="49.67999999999999" ry="25.6" fill="none" stroke="#fff6c8" stroke-width="2.400" opacity=".6"/><ellipse cx="440" cy="230" rx="36" ry="16" fill="none" stroke="#fff8cc" stroke-width="3.500" opacity=".9"/><ellipse cx="444" cy="231" rx="18.0" ry="8.0" fill="#f0d060"/></g>
<path d="M240.0 245.0C242.5 243.3 275.0 279.2 285.0 300.0C295.0 320.8 296.5 346.7 300.0 370.0C303.5 393.3 311.0 423.0 306.0 440.0C301.0 457.0 272.7 473.7 270.0 472.0C267.3 470.3 287.5 447.0 290.0 430.0C292.5 413.0 288.3 390.0 285.0 370.0C281.7 350.0 277.5 330.8 270.0 310.0C262.5 289.2 237.5 246.7 240.0 245.0z" fill="#664a12" opacity=".7" filter="url(#bl4)"/>
<path d="M232.0 492.0C240.3 482.0 283.7 478.7 300.0 480.0C316.3 481.3 324.0 489.3 330.0 500.0C336.0 510.7 344.0 534.7 336.0 544.0C328.0 553.3 296.3 556.7 282.0 556.0C267.7 555.3 258.3 550.7 250.0 540.0C241.7 529.3 223.7 502.0 232.0 492.0z" fill="#ecd890" opacity=".55" filter="url(#bl4)"/>
<path d="M530.0 340.0C534.3 350.0 549.0 381.3 556.0 400.0C563.0 418.7 569.3 443.3 572.0 452.0" fill="none" stroke="#5a3f0e" stroke-width="5" opacity=".75" filter="url(#bl2)"/>
<path d="M548.0 352.0C553.3 351.7 569.7 352.8 580.0 350.0C590.3 347.2 605.0 337.5 610.0 335.0" fill="none" stroke="#5a3f0e" stroke-width="3" opacity=".75" filter="url(#bl2)"/>
<path d="M225.0 490.0C227.5 496.7 233.8 517.3 240.0 530.0C246.2 542.7 258.3 560.0 262.0 566.0" fill="none" stroke="#5a3f0e" stroke-width="3" opacity=".75" filter="url(#bl2)"/>
<path d="M300.0 448.0C310.0 451.3 340.0 468.5 360.0 468.0C380.0 467.5 405.0 453.0 420.0 445.0C435.0 437.0 445.0 424.2 450.0 420.0" fill="none" stroke="#5a3f0e" stroke-width="3" opacity=".75" filter="url(#bl2)"/>
<path d="M330.0 500.0C333.7 492.3 352.7 491.3 358.0 498.0C363.3 504.7 365.7 532.3 362.0 540.0C358.3 547.7 341.3 550.7 336.0 544.0C330.7 537.3 326.3 507.7 330.0 500.0z" fill="#8a5a14" opacity=".7" filter="url(#bl2)"/>
<path d="M262.0 560.0C264.3 555.3 277.3 549.0 282.0 552.0C286.7 555.0 292.3 573.3 290.0 578.0C287.7 582.7 272.7 583.0 268.0 580.0C263.3 577.0 259.7 564.7 262.0 560.0z" fill="#8a5a14" opacity=".7" filter="url(#bl2)"/>
<path d="M395.0 500.0C397.0 495.7 407.2 494.3 410.0 498.0C412.8 501.7 414.0 517.7 412.0 522.0C410.0 526.3 400.8 527.7 398.0 524.0C395.2 520.3 393.0 504.3 395.0 500.0z" fill="#8a5a14" opacity=".7" filter="url(#bl2)"/>
<path d="M498.0 292.0C492.2 274.0 501.3 253.7 510.0 242.0C518.7 230.3 536.7 221.3 550.0 222.0C563.3 222.7 580.7 233.0 590.0 246.0C599.3 259.0 606.0 283.5 606.0 300.0C606.0 316.5 600.2 336.7 590.0 345.0C579.8 353.3 560.3 358.8 545.0 350.0C529.7 341.2 503.8 310.0 498.0 292.0z" fill="#4e360c" opacity=".8" filter="url(#bl4)" transform="translate(-6,-3)"/>
<path d="M498.0 292.0C492.2 274.0 501.3 253.7 510.0 242.0C518.7 230.3 536.7 221.3 550.0 222.0C563.3 222.7 580.7 233.0 590.0 246.0C599.3 259.0 606.0 283.5 606.0 300.0C606.0 316.5 600.2 336.7 590.0 345.0C579.8 353.3 560.3 358.8 545.0 350.0C529.7 341.2 503.8 310.0 498.0 292.0z" fill="url(#geyeR)"/>
<g transform="rotate(-20 375 350)"><ellipse cx="375" cy="350" rx="68" ry="73" fill="url(#gsock)"/><ellipse cx="391" cy="358" rx="42.16" ry="48.18" fill="#a87818" filter="url(#bl4)"/><ellipse cx="391" cy="358" rx="40.8" ry="46.72" fill="#000" filter="url(#tex)" opacity=".9"/></g>
<g transform="rotate(12 510 396)"><ellipse cx="510" cy="396" rx="40" ry="50" fill="url(#gsock)"/><ellipse cx="512" cy="398" rx="26.400000000000002" ry="35.0" fill="#a87818" filter="url(#bl4)"/><ellipse cx="512" cy="398" rx="28.0" ry="37.0" fill="#000" filter="url(#tex)" opacity=".9"/></g>
</g>
<g transform="rotate(-19.65 256.2 119)"><ellipse cx="256.2" cy="119" rx="214" ry="15" fill="#62666b"/><clipPath id="chb"><ellipse cx="262" cy="119.5" rx="176" ry="9.4"/></clipPath><g clip-path="url(#chb)"><ellipse cx="262" cy="119.5" rx="176" ry="9.4" fill="#cfae5c"/><ellipse cx="323.6" cy="117.62" rx="88.0" ry="7.5200000000000005" fill="#dcc070" filter="url(#bl4)"/><ellipse cx="165.2" cy="120.44" rx="21.119999999999997" ry="8.46" fill="#8c5a10" filter="url(#bl4)"/><path d="M200.4 124.2q35.2 -1.8800000000000001 79.2 -6.58t88.0 -2.82" fill="none" stroke="#9a6a18" stroke-width="2.4" filter="url(#bl2)"/><ellipse cx="262" cy="109.63" rx="176" ry="4.7" fill="#7a5410" opacity=".55" filter="url(#bl4)"/></g></g>
</g>
<g transform="translate(190,370) scale(0.30836)">
<defs><clipPath id="cpc"><path d="M80.0 145.0C77.5 152.5 67.5 170.8 65.0 190.0C62.5 209.2 62.5 235.0 65.0 260.0C67.5 285.0 72.5 313.3 80.0 340.0C87.5 366.7 98.3 396.7 110.0 420.0C121.7 443.3 136.7 462.5 150.0 480.0C163.3 497.5 177.5 514.2 190.0 525.0C202.5 535.8 206.7 544.2 225.0 545.0C243.3 545.8 277.5 535.0 300.0 530.0C322.5 525.0 340.0 520.0 360.0 515.0C380.0 510.0 396.7 506.7 420.0 500.0C443.3 493.3 476.7 482.5 500.0 475.0C523.3 467.5 548.3 461.7 560.0 455.0C571.7 448.3 565.0 442.5 570.0 435.0C575.0 427.5 583.7 419.2 590.0 410.0C596.3 400.8 606.3 395.0 608.0 380.0C609.7 365.0 603.0 340.0 600.0 320.0C597.0 300.0 594.2 280.0 590.0 260.0C585.8 240.0 580.8 220.0 575.0 200.0C569.2 180.0 563.3 159.2 555.0 140.0C546.7 120.8 534.2 100.0 525.0 85.0C515.8 70.0 506.7 57.2 500.0 50.0C493.3 42.8 487.5 43.3 485.0 42.0z"/></clipPath></defs>
<g clip-path="url(#cpc)">
<path d="M80.0 145.0C77.5 152.5 67.5 170.8 65.0 190.0C62.5 209.2 62.5 235.0 65.0 260.0C67.5 285.0 72.5 313.3 80.0 340.0C87.5 366.7 98.3 396.7 110.0 420.0C121.7 443.3 136.7 462.5 150.0 480.0C163.3 497.5 177.5 514.2 190.0 525.0C202.5 535.8 206.7 544.2 225.0 545.0C243.3 545.8 277.5 535.0 300.0 530.0C322.5 525.0 340.0 520.0 360.0 515.0C380.0 510.0 396.7 506.7 420.0 500.0C443.3 493.3 476.7 482.5 500.0 475.0C523.3 467.5 548.3 461.7 560.0 455.0C571.7 448.3 565.0 442.5 570.0 435.0C575.0 427.5 583.7 419.2 590.0 410.0C596.3 400.8 606.3 395.0 608.0 380.0C609.7 365.0 603.0 340.0 600.0 320.0C597.0 300.0 594.2 280.0 590.0 260.0C585.8 240.0 580.8 220.0 575.0 200.0C569.2 180.0 563.3 159.2 555.0 140.0C546.7 120.8 534.2 100.0 525.0 85.0C515.8 70.0 506.7 57.2 500.0 50.0C493.3 42.8 487.5 43.3 485.0 42.0z" fill="url(#gbody)"/>
<ellipse cx="355" cy="200" rx="190" ry="100" fill="#f0d886" opacity=".75" filter="url(#bl20)"/>
<ellipse cx="125" cy="350" rx="75" ry="100" fill="#ead080" opacity=".6" filter="url(#bl20)"/>
<path d="M80.0 145.0C77.5 152.5 67.5 170.8 65.0 190.0C62.5 209.2 62.5 235.0 65.0 260.0C67.5 285.0 72.5 313.3 80.0 340.0C87.5 366.7 98.3 396.7 110.0 420.0C121.7 443.3 136.7 462.5 150.0 480.0C163.3 497.5 177.5 514.2 190.0 525.0C202.5 535.8 206.7 544.2 225.0 545.0C243.3 545.8 277.5 535.0 300.0 530.0C322.5 525.0 340.0 520.0 360.0 515.0C380.0 510.0 396.7 506.7 420.0 500.0C443.3 493.3 476.7 482.5 500.0 475.0C523.3 467.5 548.3 461.7 560.0 455.0C571.7 448.3 565.0 442.5 570.0 435.0C575.0 427.5 583.7 419.2 590.0 410.0C596.3 400.8 606.3 395.0 608.0 380.0C609.7 365.0 603.0 340.0 600.0 320.0C597.0 300.0 594.2 280.0 590.0 260.0C585.8 240.0 580.8 220.0 575.0 200.0C569.2 180.0 563.3 159.2 555.0 140.0C546.7 120.8 534.2 100.0 525.0 85.0C515.8 70.0 506.7 57.2 500.0 50.0C493.3 42.8 487.5 43.3 485.0 42.0z" fill="none" stroke="#7a5a18" stroke-width="20" opacity=".45" filter="url(#bl8)"/>
<path d="M80.0 145.0C77.5 152.5 67.5 170.8 65.0 190.0C62.5 209.2 62.5 235.0 65.0 260.0C67.5 285.0 72.5 313.3 80.0 340.0C87.5 366.7 98.3 396.7 110.0 420.0C121.7 443.3 136.7 462.5 150.0 480.0C163.3 497.5 177.5 514.2 190.0 525.0C202.5 535.8 206.7 544.2 225.0 545.0C243.3 545.8 277.5 535.0 300.0 530.0C322.5 525.0 340.0 520.0 360.0 515.0C380.0 510.0 396.7 506.7 420.0 500.0C443.3 493.3 476.7 482.5 500.0 475.0C523.3 467.5 548.3 461.7 560.0 455.0C571.7 448.3 565.0 442.5 570.0 435.0C575.0 427.5 583.7 419.2 590.0 410.0C596.3 400.8 606.3 395.0 608.0 380.0C609.7 365.0 603.0 340.0 600.0 320.0C597.0 300.0 594.2 280.0 590.0 260.0C585.8 240.0 580.8 220.0 575.0 200.0C569.2 180.0 563.3 159.2 555.0 140.0C546.7 120.8 534.2 100.0 525.0 85.0C515.8 70.0 506.7 57.2 500.0 50.0C493.3 42.8 487.5 43.3 485.0 42.0z" fill="none" stroke="#5a400e" stroke-width="6" opacity=".5" filter="url(#bl2)"/>
<path d="M485 42L80 145" fill="none" stroke="#e8cf7c" stroke-width="46" opacity=".95" filter="url(#bl8)"/>
<ellipse cx="276.5" cy="550" rx="226.25" ry="50" fill="#745418" opacity=".5" filter="url(#bl20)"/>
<path d="M212.0 212.0C217.5 223.3 239.5 258.7 245.0 280.0C250.5 301.3 244.2 317.0 245.0 340.0C245.8 363.0 261.5 400.5 250.0 418.0C238.5 435.5 192.7 441.3 176.0 445.0C159.3 448.7 154.3 440.8 150.0 440.0" fill="none" stroke="#6e5018" stroke-width="18" opacity=".6" filter="url(#bl8)"/>
<path d="M212.0 212.0C217.5 223.3 239.5 258.7 245.0 280.0C250.5 301.3 244.2 317.0 245.0 340.0C245.8 363.0 261.5 400.5 250.0 418.0C238.5 435.5 188.3 440.5 176.0 445.0" fill="none" stroke="#553a0c" stroke-width="3.5" opacity=".8" filter="url(#bl2)"/>
<ellipse cx="317" cy="438" rx="90" ry="20" fill="#f0dc98" opacity=".7" filter="url(#bl8)"/>
<rect x="55" y="32" width="563" height="523" filter="url(#mot)" opacity=".3"/>
<rect x="55" y="32" width="563" height="523" filter="url(#mot2)" opacity=".22"/>
<g transform="rotate(10 415 220)"><ellipse cx="415" cy="220" rx="68.39999999999999" ry="39.099999999999994" fill="#f6e8a8" opacity=".55" filter="url(#bl8)"/><ellipse cx="412" cy="222" rx="63.0" ry="35.7" fill="none" stroke="#fdf2bc" stroke-width="2" opacity=".45"/><ellipse cx="413" cy="221" rx="49.67999999999999" ry="27.200000000000003" fill="none" stroke="#fff6c8" stroke-width="2.400" opacity=".6"/><ellipse cx="415" cy="220" rx="36" ry="17" fill="none" stroke="#fff8cc" stroke-width="3.500" opacity=".9"/><ellipse cx="419" cy="221" rx="18.0" ry="8.5" fill="#f0d060"/></g>
<path d="M215.0 215.0C217.5 215.0 243.8 259.2 250.0 280.0C256.2 300.8 251.0 317.5 252.0 340.0C253.0 362.5 259.3 399.7 256.0 415.0C252.7 430.3 234.7 444.5 232.0 432.0C229.3 419.5 239.5 365.3 240.0 340.0C240.5 314.7 239.2 300.8 235.0 280.0C230.8 259.2 212.5 215.0 215.0 215.0z" fill="#664a12" opacity=".7" filter="url(#bl4)"/>
<path d="M190.0 455.0C197.5 445.0 234.2 437.5 250.0 440.0C265.8 442.5 277.5 455.8 285.0 470.0C292.5 484.2 304.2 513.3 295.0 525.0C285.8 536.7 245.0 544.2 230.0 540.0C215.0 535.8 211.7 514.2 205.0 500.0C198.3 485.8 182.5 465.0 190.0 455.0z" fill="#ecd890" opacity=".55" filter="url(#bl4)"/>
<path d="M490.0 345.0C493.7 354.2 505.7 380.5 512.0 400.0C518.3 419.5 525.3 451.7 528.0 462.0" fill="none" stroke="#5a3f0e" stroke-width="5" opacity=".75" filter="url(#bl2)"/>
<path d="M508.0 356.0C514.2 356.7 531.3 361.8 545.0 360.0C558.7 358.2 582.5 347.5 590.0 345.0" fill="none" stroke="#5a3f0e" stroke-width="3" opacity=".75" filter="url(#bl2)"/>
<path d="M185.0 455.0C188.3 462.5 197.8 485.8 205.0 500.0C212.2 514.2 224.2 533.3 228.0 540.0" fill="none" stroke="#5a3f0e" stroke-width="3" opacity=".75" filter="url(#bl2)"/>
<path d="M250.0 420.0C260.0 422.0 290.0 432.0 310.0 432.0C330.0 432.0 355.0 425.3 370.0 420.0C385.0 414.7 395.0 403.3 400.0 400.0" fill="none" stroke="#5a3f0e" stroke-width="3" opacity=".75" filter="url(#bl2)"/>
<path d="M288.0 480.0C294.7 472.0 330.5 468.2 340.0 474.0C349.5 479.8 351.7 507.0 345.0 515.0C338.3 523.0 309.5 527.8 300.0 522.0C290.5 516.2 281.3 488.0 288.0 480.0z" fill="#8a5a14" opacity=".7" filter="url(#bl2)"/>
<path d="M225.0 520.0C226.3 514.5 235.8 508.7 240.0 512.0C244.2 515.3 251.3 534.5 250.0 540.0C248.7 545.5 236.2 548.3 232.0 545.0C227.8 541.7 223.7 525.5 225.0 520.0z" fill="#8a5a14" opacity=".7" filter="url(#bl2)"/>
<path d="M520.0 420.0C522.8 411.3 540.0 404.2 545.0 410.0C550.0 415.8 552.8 446.3 550.0 455.0C547.2 463.7 533.0 467.8 528.0 462.0C523.0 456.2 517.2 428.7 520.0 420.0z" fill="#8a5a14" opacity=".7" filter="url(#bl2)"/>
<path d="M470.0 297.0C466.7 278.8 479.2 258.2 490.0 247.0C500.8 235.8 520.8 227.8 535.0 230.0C549.2 232.2 566.5 245.0 575.0 260.0C583.5 275.0 588.5 303.3 586.0 320.0C583.5 336.7 572.7 354.0 560.0 360.0C547.3 366.0 525.0 366.5 510.0 356.0C495.0 345.5 473.3 315.2 470.0 297.0z" fill="#4e360c" opacity=".8" filter="url(#bl4)" transform="translate(-6,-3)"/>
<path d="M470.0 297.0C466.7 278.8 479.2 258.2 490.0 247.0C500.8 235.8 520.8 227.8 535.0 230.0C549.2 232.2 566.5 245.0 575.0 260.0C583.5 275.0 588.5 303.3 586.0 320.0C583.5 336.7 572.7 354.0 560.0 360.0C547.3 366.0 525.0 366.5 510.0 356.0C495.0 345.5 473.3 315.2 470.0 297.0z" fill="url(#geyeR)"/>
<g transform="rotate(-15 337 335)"><ellipse cx="337" cy="335" rx="70" ry="73" fill="url(#gsock)"/><ellipse cx="353" cy="343" rx="43.4" ry="48.18" fill="#a87818" filter="url(#bl4)"/><ellipse cx="353" cy="343" rx="42.0" ry="46.72" fill="#000" filter="url(#tex)" opacity=".9"/></g>
<g transform="rotate(10 460 392)"><ellipse cx="460" cy="392" rx="40" ry="55" fill="url(#gsock)"/><ellipse cx="462" cy="394" rx="26.400000000000002" ry="38.5" fill="#a87818" filter="url(#bl4)"/><ellipse cx="462" cy="394" rx="28.0" ry="40.7" fill="#000" filter="url(#tex)" opacity=".9"/></g>
</g>
<g transform="rotate(-13.5 283.1 92.7)"><ellipse cx="283.1" cy="92.7" rx="206" ry="7.5" fill="#62666b"/><clipPath id="chc"><ellipse cx="284" cy="92" rx="180" ry="4.2"/></clipPath><g clip-path="url(#chc)"><ellipse cx="284" cy="92" rx="180" ry="4.2" fill="#cfae5c"/><ellipse cx="347.0" cy="91.16" rx="90.0" ry="3.3600000000000003" fill="#dcc070" filter="url(#bl4)"/><ellipse cx="185.0" cy="92.42" rx="21.599999999999998" ry="3.7800000000000002" fill="#8c5a10" filter="url(#bl4)"/><path d="M221.0 94.1q36.0 -0.8400000000000001 81.0 -2.94t90.0 -1.26" fill="none" stroke="#9a6a18" stroke-width="2.0" filter="url(#bl2)"/><ellipse cx="284" cy="87.59" rx="180" ry="2.1" fill="#7a5410" opacity=".55" filter="url(#bl4)"/></g></g>
</g>
<g transform="translate(670,370) scale(0.30836)">
<defs><clipPath id="cpd"><path d="M95.0 125.0C92.8 134.2 83.7 157.5 82.0 180.0C80.3 202.5 82.8 233.3 85.0 260.0C87.2 286.7 90.8 316.7 95.0 340.0C99.2 363.3 102.5 380.0 110.0 400.0C117.5 420.0 130.0 441.7 140.0 460.0C150.0 478.3 161.7 498.7 170.0 510.0C178.3 521.3 175.0 526.7 190.0 528.0C205.0 529.3 233.3 521.0 260.0 518.0C286.7 515.0 318.3 513.8 350.0 510.0C381.7 506.2 417.5 499.2 450.0 495.0C482.5 490.8 526.7 492.5 545.0 485.0C563.3 477.5 553.3 459.2 560.0 450.0C566.7 440.8 580.3 438.3 585.0 430.0C589.7 421.7 588.8 416.7 588.0 400.0C587.2 383.3 582.2 353.3 580.0 330.0C577.8 306.7 576.7 283.3 575.0 260.0C573.3 236.7 573.3 211.7 570.0 190.0C566.7 168.3 560.8 146.7 555.0 130.0C549.2 113.3 542.5 100.8 535.0 90.0C527.5 79.2 514.2 69.2 510.0 65.0C491.7 67.3 443.3 73.8 400.0 79.0C356.7 84.2 295.0 90.5 250.0 96.0C205.0 101.5 155.8 107.2 130.0 112.0C104.2 116.8 100.8 122.8 95.0 125.0z"/></clipPath></defs>
<g clip-path="url(#cpd)">
<path d="M95.0 125.0C92.8 134.2 83.7 157.5 82.0 180.0C80.3 202.5 82.8 233.3 85.0 260.0C87.2 286.7 90.8 316.7 95.0 340.0C99.2 363.3 102.5 380.0 110.0 400.0C117.5 420.0 130.0 441.7 140.0 460.0C150.0 478.3 161.7 498.7 170.0 510.0C178.3 521.3 175.0 526.7 190.0 528.0C205.0 529.3 233.3 521.0 260.0 518.0C286.7 515.0 318.3 513.8 350.0 510.0C381.7 506.2 417.5 499.2 450.0 495.0C482.5 490.8 526.7 492.5 545.0 485.0C563.3 477.5 553.3 459.2 560.0 450.0C566.7 440.8 580.3 438.3 585.0 430.0C589.7 421.7 588.8 416.7 588.0 400.0C587.2 383.3 582.2 353.3 580.0 330.0C577.8 306.7 576.7 283.3 575.0 260.0C573.3 236.7 573.3 211.7 570.0 190.0C566.7 168.3 560.8 146.7 555.0 130.0C549.2 113.3 542.5 100.8 535.0 90.0C527.5 79.2 514.2 69.2 510.0 65.0C491.7 67.3 443.3 73.8 400.0 79.0C356.7 84.2 295.0 90.5 250.0 96.0C205.0 101.5 155.8 107.2 130.0 112.0C104.2 116.8 100.8 122.8 95.0 125.0z" fill="url(#gbody)"/>
<ellipse cx="330" cy="212" rx="190" ry="100" fill="#f0d886" opacity=".75" filter="url(#bl20)"/>
<ellipse cx="86" cy="410" rx="75" ry="100" fill="#ead080" opacity=".6" filter="url(#bl20)"/>
<path d="M95.0 125.0C92.8 134.2 83.7 157.5 82.0 180.0C80.3 202.5 82.8 233.3 85.0 260.0C87.2 286.7 90.8 316.7 95.0 340.0C99.2 363.3 102.5 380.0 110.0 400.0C117.5 420.0 130.0 441.7 140.0 460.0C150.0 478.3 161.7 498.7 170.0 510.0C178.3 521.3 175.0 526.7 190.0 528.0C205.0 529.3 233.3 521.0 260.0 518.0C286.7 515.0 318.3 513.8 350.0 510.0C381.7 506.2 417.5 499.2 450.0 495.0C482.5 490.8 526.7 492.5 545.0 485.0C563.3 477.5 553.3 459.2 560.0 450.0C566.7 440.8 580.3 438.3 585.0 430.0C589.7 421.7 588.8 416.7 588.0 400.0C587.2 383.3 582.2 353.3 580.0 330.0C577.8 306.7 576.7 283.3 575.0 260.0C573.3 236.7 573.3 211.7 570.0 190.0C566.7 168.3 560.8 146.7 555.0 130.0C549.2 113.3 542.5 100.8 535.0 90.0C527.5 79.2 514.2 69.2 510.0 65.0C491.7 67.3 443.3 73.8 400.0 79.0C356.7 84.2 295.0 90.5 250.0 96.0C205.0 101.5 155.8 107.2 130.0 112.0C104.2 116.8 100.8 122.8 95.0 125.0z" fill="none" stroke="#7a5a18" stroke-width="20" opacity=".45" filter="url(#bl8)"/>
<path d="M95.0 125.0C92.8 134.2 83.7 157.5 82.0 180.0C80.3 202.5 82.8 233.3 85.0 260.0C87.2 286.7 90.8 316.7 95.0 340.0C99.2 363.3 102.5 380.0 110.0 400.0C117.5 420.0 130.0 441.7 140.0 460.0C150.0 478.3 161.7 498.7 170.0 510.0C178.3 521.3 175.0 526.7 190.0 528.0C205.0 529.3 233.3 521.0 260.0 518.0C286.7 515.0 318.3 513.8 350.0 510.0C381.7 506.2 417.5 499.2 450.0 495.0C482.5 490.8 526.7 492.5 545.0 485.0C563.3 477.5 553.3 459.2 560.0 450.0C566.7 440.8 580.3 438.3 585.0 430.0C589.7 421.7 588.8 416.7 588.0 400.0C587.2 383.3 582.2 353.3 580.0 330.0C577.8 306.7 576.7 283.3 575.0 260.0C573.3 236.7 573.3 211.7 570.0 190.0C566.7 168.3 560.8 146.7 555.0 130.0C549.2 113.3 542.5 100.8 535.0 90.0C527.5 79.2 514.2 69.2 510.0 65.0C491.7 67.3 443.3 73.8 400.0 79.0C356.7 84.2 295.0 90.5 250.0 96.0C205.0 101.5 155.8 107.2 130.0 112.0C104.2 116.8 100.8 122.8 95.0 125.0z" fill="none" stroke="#5a400e" stroke-width="6" opacity=".5" filter="url(#bl2)"/>
<path d="M510.0 65.0C491.7 67.3 443.3 73.8 400.0 79.0C356.7 84.2 295.0 90.5 250.0 96.0C205.0 101.5 155.8 107.2 130.0 112.0C104.2 116.8 100.8 122.8 95.0 125.0" fill="none" stroke="#e8cf7c" stroke-width="46" opacity=".95" filter="url(#bl8)"/>
<ellipse cx="275.0" cy="533" rx="210.83333333333334" ry="50" fill="#745418" opacity=".5" filter="url(#bl20)"/>
<path d="M205.0 228.0C206.7 240.0 214.8 271.3 215.0 300.0C215.2 328.7 217.5 379.2 206.0 400.0C194.5 420.8 160.3 421.7 146.0 425.0C131.7 428.3 124.3 420.8 120.0 420.0" fill="none" stroke="#6e5018" stroke-width="18" opacity=".6" filter="url(#bl8)"/>
<path d="M205.0 228.0C206.7 240.0 214.8 271.3 215.0 300.0C215.2 328.7 217.5 379.2 206.0 400.0C194.5 420.8 160.3 421.7 146.0 425.0C131.7 428.3 124.3 420.8 120.0 420.0" fill="none" stroke="#553a0c" stroke-width="3.5" opacity=".8" filter="url(#bl2)"/>
<ellipse cx="281" cy="435" rx="90" ry="20" fill="#f0dc98" opacity=".7" filter="url(#bl8)"/>
<rect x="72" y="55" width="526" height="483" filter="url(#mot)" opacity=".3"/>
<rect x="72" y="55" width="526" height="483" filter="url(#mot2)" opacity=".22"/>
<g transform="rotate(10 390 232)"><ellipse cx="390" cy="232" rx="72.2" ry="41.4" fill="#f6e8a8" opacity=".55" filter="url(#bl8)"/><ellipse cx="387" cy="234" rx="66.5" ry="37.800000000000004" fill="none" stroke="#fdf2bc" stroke-width="2" opacity=".45"/><ellipse cx="388" cy="233" rx="52.44" ry="28.8" fill="none" stroke="#fff6c8" stroke-width="2.400" opacity=".6"/><ellipse cx="390" cy="232" rx="38" ry="18" fill="none" stroke="#fff8cc" stroke-width="3.500" opacity=".9"/><ellipse cx="394" cy="233" rx="19.0" ry="9.0" fill="#f0d060"/></g>
<path d="M85.0 135.0C103.3 113.0 173.5 100.5 195.0 128.0C216.5 155.5 212.3 254.7 214.0 300.0C215.7 345.3 215.7 379.2 205.0 400.0C194.3 420.8 165.8 425.0 150.0 425.0C134.2 425.0 120.8 427.5 110.0 400.0C99.2 372.5 89.2 304.2 85.0 260.0C80.8 215.8 66.7 157.0 85.0 135.0z" fill="#86641e" opacity=".38" filter="url(#bl8)"/>
<path d="M200.0 230.0C203.0 225.0 216.3 271.7 218.0 300.0C219.7 328.3 214.3 381.3 210.0 400.0C205.7 418.7 193.7 423.7 192.0 412.0C190.3 400.3 198.7 360.3 200.0 330.0C201.3 299.7 197.0 235.0 200.0 230.0z" fill="#664a12" opacity=".7" filter="url(#bl4)"/>
<path d="M165.0 440.0C173.3 433.3 216.7 437.5 230.0 450.0C243.3 462.5 250.0 502.7 245.0 515.0C240.0 527.3 210.8 528.2 200.0 524.0C189.2 519.8 185.8 504.0 180.0 490.0C174.2 476.0 156.7 446.7 165.0 440.0z" fill="#ecd890" opacity=".55" filter="url(#bl4)"/>
<path d="M150.0 425.0C166.7 427.5 220.0 439.2 250.0 440.0C280.0 440.8 309.7 435.0 330.0 430.0C350.3 425.0 365.0 413.3 372.0 410.0" fill="none" stroke="#5a3f0e" stroke-width="3" opacity=".75" filter="url(#bl2)"/>
<path d="M160.0 440.0C164.2 448.3 175.8 475.8 185.0 490.0C194.2 504.2 210.0 519.2 215.0 525.0" fill="none" stroke="#5a3f0e" stroke-width="3" opacity=".75" filter="url(#bl2)"/>
<path d="M458.0 400.0C468.3 402.0 499.7 412.0 520.0 412.0C540.3 412.0 570.0 402.0 580.0 400.0" fill="none" stroke="#5a3f0e" stroke-width="3" opacity=".75" filter="url(#bl2)"/>
<path d="M440.0 300.0C444.7 293.7 454.7 269.7 468.0 262.0C481.3 254.3 505.3 249.7 520.0 254.0C534.7 258.3 550.0 282.3 556.0 288.0" fill="none" stroke="#5a3f0e" stroke-width="5" opacity=".75" filter="url(#bl2)"/>
<path d="M240.0 470.0C247.5 461.0 289.2 458.5 300.0 466.0C310.8 473.5 312.5 506.0 305.0 515.0C297.5 524.0 265.8 527.5 255.0 520.0C244.2 512.5 232.5 479.0 240.0 470.0z" fill="#8a5a14" opacity=".7" filter="url(#bl2)"/>
<path d="M500.0 440.0C505.0 431.2 532.5 428.0 540.0 435.0C547.5 442.0 550.0 473.2 545.0 482.0C540.0 490.8 517.5 495.0 510.0 488.0C502.5 481.0 495.0 448.8 500.0 440.0z" fill="#8a5a14" opacity=".7" filter="url(#bl2)"/>
<path d="M190.0 500.0C191.2 494.5 200.8 490.8 205.0 495.0C209.2 499.2 216.2 519.5 215.0 525.0C213.8 530.5 202.2 532.2 198.0 528.0C193.8 523.8 188.8 505.5 190.0 500.0z" fill="#8a5a14" opacity=".7" filter="url(#bl2)"/>
<path d="M440.0 322.0C435.8 303.0 445.0 283.7 455.0 272.0C465.0 260.3 484.5 252.0 500.0 252.0C515.5 252.0 537.7 260.7 548.0 272.0C558.3 283.3 562.5 301.3 562.0 320.0C561.5 338.7 558.7 373.0 545.0 384.0C531.3 395.0 497.5 396.3 480.0 386.0C462.5 375.7 444.2 341.0 440.0 322.0z" fill="#4e360c" opacity=".8" filter="url(#bl4)" transform="translate(-6,-3)"/>
<path d="M440.0 322.0C435.8 303.0 445.0 283.7 455.0 272.0C465.0 260.3 484.5 252.0 500.0 252.0C515.5 252.0 537.7 260.7 548.0 272.0C558.3 283.3 562.5 301.3 562.0 320.0C561.5 338.7 558.7 373.0 545.0 384.0C531.3 395.0 497.5 396.3 480.0 386.0C462.5 375.7 444.2 341.0 440.0 322.0z" fill="url(#geyeR2)"/>
<g transform="rotate(-10 301 331)"><ellipse cx="301" cy="331" rx="73" ry="74" fill="url(#gsock)"/><ellipse cx="317" cy="339" rx="45.26" ry="48.84" fill="#a87818" filter="url(#bl4)"/><ellipse cx="317" cy="339" rx="43.8" ry="47.36" fill="#000" filter="url(#tex)" opacity=".9"/></g>
<g transform="rotate(5 415 404)"><ellipse cx="415" cy="404" rx="43" ry="58" fill="url(#gsock)"/><ellipse cx="417" cy="406" rx="28.380000000000003" ry="40.599999999999994" fill="#a87818" filter="url(#bl4)"/><ellipse cx="417" cy="406" rx="30.099999999999998" ry="42.92" fill="#000" filter="url(#tex)" opacity=".9"/></g>
</g>
<path d="M510.0 65.0C491.7 67.3 443.3 73.8 400.0 79.0C356.7 84.2 295.0 90.5 250.0 96.0C205.0 101.5 155.8 107.2 130.0 112.0C104.2 116.8 100.8 122.8 95.0 125.0" fill="none" stroke="#6e6550" stroke-width="3"/>
</g>
</svg>
<div class="abs" style="left:528px;top:330.500px;width:480px;height:264px;border:2px solid #fff"></div>
<div class="abs" style="left:1008px;top:65.800px;width:10px;height:528px;background:#f0f0f0"></div>
<div class="abs" style="left:1006px;top:592.500px;width:12px;height:2px;background:#fff"></div>
<div class="abs" style="left:1008.600px;top:566.800px;width:8.600px;height:10.200px;background:#a6a6a6"></div>
<svg class="abs" style="left:1008px;top:66px" width="10" height="528" viewBox="0 0 10 528"><path d="M2.600 6.800L5 4.400 7.400 6.800M2.600 521.800L5 524.200 7.400 521.800" fill="none" stroke="#505050" stroke-width="1"/></svg>
<div class="sq" style="left:49.300000000000004px;top:68.30000000000001px"></div>
<div class="tx" style="left:55.7px;transform-origin:0 50%;top:69.64px;font-size:7.4px;line-height:7.4px;color:#ececec;transform:scaleX(0.836);">SEYMOUR^JANE</div>
<div class="tx" style="left:55.7px;transform-origin:0 50%;top:78.19px;font-size:7.4px;line-height:7.4px;color:#ececec;transform:scaleX(0.873);">12/5/1963 F</div>
<div class="tx" style="left:55.7px;transform-origin:0 50%;top:86.74px;font-size:7.4px;line-height:7.4px;color:#ececec;transform:scaleX(0.863);">ID: 234</div>
<div class="tx" style="left:55.7px;transform-origin:0 50%;top:95.29px;font-size:7.4px;line-height:7.4px;color:#ececec;transform:scaleX(0.847);">Acc: 790</div>
<div class="tx" style="right:498.6px;transform-origin:100% 50%;top:69.64px;font-size:7.4px;line-height:7.4px;color:#ececec;transform:scaleX(0.878);">10/17/2006</div>
<div class="tx" style="right:498.6px;transform-origin:100% 50%;top:78.19px;font-size:7.4px;line-height:7.4px;color:#ececec;transform:scaleX(0.890);">Ser: 101</div>
<div class="tx" style="right:498.6px;transform-origin:100% 50%;top:86.74px;font-size:7.4px;line-height:7.4px;color:#ececec;transform:scaleX(0.831);">Img: 69</div>
<div class="tx" style="left:55.7px;transform-origin:0 50%;top:320.04px;font-size:7.4px;line-height:7.4px;color:#ececec;transform:scaleX(0.871);">C128 W256 S0.0 U0.0</div>
<div class="tx" style="left:263.03px;transform-origin:50% 50%;top:311.49px;font-size:7.4px;line-height:7.4px;color:#ececec;transform:scaleX(0.863);">3D Color Volume</div>
<div class="tx" style="left:280.72px;transform-origin:50% 50%;top:320.04px;font-size:7.4px;line-height:7.4px;color:#ececec;transform:scaleX(0.778);">HEAD</div>
<div class="tx" style="left:281.02px;transform-origin:50% 50%;top:319.24px;font-size:7.4px;line-height:7.4px;color:#c8c8c8;transform:scaleX(0.730);opacity:.55">HEAD</div>
<div class="tx" style="right:500.5px;transform-origin:100% 50%;top:303.04px;font-size:7.4px;line-height:7.4px;color:#ececec;transform:scaleX(0.871);">Tech:</div>
<div class="tx" style="right:498.6px;transform-origin:100% 50%;top:311.54px;font-size:7.4px;line-height:7.4px;color:#ececec;transform:scaleX(0.855);">RamSoft</div>
<div class="tx" style="right:498.6px;transform-origin:100% 50%;top:320.04px;font-size:7.4px;line-height:7.4px;color:#ececec;transform:scaleX(0.826);">RAMSOFT INC</div>
<div class="sq" style="left:49.300000000000004px;top:332.0px"></div>
<div class="tx" style="left:55.7px;transform-origin:0 50%;top:333.34px;font-size:7.4px;line-height:7.4px;color:#ececec;transform:scaleX(0.836);">SEYMOUR^JANE</div>
<div class="tx" style="left:55.7px;transform-origin:0 50%;top:341.89px;font-size:7.4px;line-height:7.4px;color:#ececec;transform:scaleX(0.873);">12/5/1963 F</div>
<div class="tx" style="left:55.7px;transform-origin:0 50%;top:350.44px;font-size:7.4px;line-height:7.4px;color:#ececec;transform:scaleX(0.863);">ID: 234</div>
<div class="tx" style="left:55.7px;transform-origin:0 50%;top:358.99px;font-size:7.4px;line-height:7.4px;color:#ececec;transform:scaleX(0.847);">Acc: 790</div>
<div class="tx" style="right:498.6px;transform-origin:100% 50%;top:333.34px;font-size:7.4px;line-height:7.4px;color:#ececec;transform:scaleX(0.878);">10/17/2006</div>
<div class="tx" style="right:498.6px;transform-origin:100% 50%;top:341.89px;font-size:7.4px;line-height:7.4px;color:#ececec;transform:scaleX(0.890);">Ser: 101</div>
<div class="tx" style="right:498.6px;transform-origin:100% 50%;top:350.44px;font-size:7.4px;line-height:7.4px;color:#ececec;transform:scaleX(0.831);">Img: 71</div>
<div class="tx" style="left:55.7px;transform-origin:0 50%;top:584.04px;font-size:7.4px;line-height:7.4px;color:#ececec;transform:scaleX(0.871);">C128 W256 S0.0 U0.0</div>
<div class="tx" style="left:263.03px;transform-origin:50% 50%;top:575.49px;font-size:7.4px;line-height:7.4px;color:#ececec;transform:scaleX(0.863);">3D Color Volume</div>
<div class="tx" style="left:280.72px;transform-origin:50% 50%;top:584.04px;font-size:7.4px;line-height:7.4px;color:#ececec;transform:scaleX(0.778);">HEAD</div>
<div class="tx" style="left:281.02px;transform-origin:50% 50%;top:583.24px;font-size:7.4px;line-height:7.4px;color:#c8c8c8;transform:scaleX(0.730);opacity:.55">HEAD</div>
<div class="tx" style="right:500.5px;transform-origin:100% 50%;top:567.04px;font-size:7.4px;line-height:7.4px;color:#ececec;transform:scaleX(0.871);">Tech:</div>
<div class="tx" style="right:498.6px;transform-origin:100% 50%;top:575.54px;font-size:7.4px;line-height:7.4px;color:#ececec;transform:scaleX(0.855);">RamSoft</div>
<div class="tx" style="right:498.6px;transform-origin:100% 50%;top:584.04px;font-size:7.4px;line-height:7.4px;color:#ececec;transform:scaleX(0.826);">RAMSOFT INC</div>
<div class="tx" style="left:281.80px;transform-origin:50% 50%;top:69.87px;font-size:9.6px;line-height:9.6px;color:#f4f4f4;transform:scaleX(0.958);">S/L</div>
<div class="tx" style="left:285.40px;transform-origin:50% 50%;top:333.27px;font-size:9.6px;line-height:9.6px;color:#f4f4f4;transform:scaleX(0.843);">S</div>
<div class="tx" style="left:159.60000000000002px;transform-origin:0 50%;top:194.17px;font-size:9.6px;line-height:9.6px;color:#f4f4f4;transform:scaleX(0.901);">R/P/S</div>
<div class="tx" style="left:398.9px;transform-origin:0 50%;top:193.87px;font-size:9.6px;line-height:9.6px;color:#f4f4f4;transform:scaleX(0.922);">L/A/I</div>
<div class="tx" style="left:159.60000000000002px;transform-origin:0 50%;top:458.27px;font-size:9.6px;line-height:9.6px;color:#f4f4f4;transform:scaleX(0.865);">R</div>
<div class="tx" style="left:412.09999999999997px;transform-origin:0 50%;top:458.27px;font-size:9.6px;line-height:9.6px;color:#f4f4f4;transform:scaleX(0.862);">L</div>
<div class="sq" style="left:529.6px;top:68.30000000000001px"></div>
<div class="tx" style="left:536px;transform-origin:0 50%;top:69.64px;font-size:7.4px;line-height:7.4px;color:#ececec;transform:scaleX(0.836);">SEYMOUR^JANE</div>
<div class="tx" style="left:536px;transform-origin:0 50%;top:78.19px;font-size:7.4px;line-height:7.4px;color:#ececec;transform:scaleX(0.873);">12/5/1963 F</div>
<div class="tx" style="left:536px;transform-origin:0 50%;top:86.74px;font-size:7.4px;line-height:7.4px;color:#ececec;transform:scaleX(0.863);">ID: 234</div>
<div class="tx" style="left:536px;transform-origin:0 50%;top:95.29px;font-size:7.4px;line-height:7.4px;color:#ececec;transform:scaleX(0.847);">Acc: 790</div>
<div class="tx" style="right:18.299999999999955px;transform-origin:100% 50%;top:69.64px;font-size:7.4px;line-height:7.4px;color:#ececec;transform:scaleX(0.878);">10/17/2006</div>
<div class="tx" style="right:18.299999999999955px;transform-origin:100% 50%;top:78.19px;font-size:7.4px;line-height:7.4px;color:#ececec;transform:scaleX(0.890);">Ser: 101</div>
<div class="tx" style="right:18.299999999999955px;transform-origin:100% 50%;top:86.74px;font-size:7.4px;line-height:7.4px;color:#ececec;transform:scaleX(0.831);">Img: 70</div>
<div class="tx" style="left:536px;transform-origin:0 50%;top:320.04px;font-size:7.4px;line-height:7.4px;color:#ececec;transform:scaleX(0.871);">C128 W256 S0.0 U0.0</div>
<div class="tx" style="left:743.33px;transform-origin:50% 50%;top:311.49px;font-size:7.4px;line-height:7.4px;color:#ececec;transform:scaleX(0.863);">3D Color Volume</div>
<div class="tx" style="left:761.02px;transform-origin:50% 50%;top:320.04px;font-size:7.4px;line-height:7.4px;color:#ececec;transform:scaleX(0.778);">HEAD</div>
<div class="tx" style="left:761.32px;transform-origin:50% 50%;top:319.24px;font-size:7.4px;line-height:7.4px;color:#c8c8c8;transform:scaleX(0.730);opacity:.55">HEAD</div>
<div class="tx" style="right:20.199999999999932px;transform-origin:100% 50%;top:303.04px;font-size:7.4px;line-height:7.4px;color:#ececec;transform:scaleX(0.871);">Tech:</div>
<div class="tx" style="right:18.299999999999955px;transform-origin:100% 50%;top:311.54px;font-size:7.4px;line-height:7.4px;color:#ececec;transform:scaleX(0.855);">RamSoft</div>
<div class="tx" style="right:18.299999999999955px;transform-origin:100% 50%;top:320.04px;font-size:7.4px;line-height:7.4px;color:#ececec;transform:scaleX(0.826);">RAMSOFT INC</div>
<div class="sq" style="left:529.6px;top:332.0px"></div>
<div class="tx" style="left:536px;transform-origin:0 50%;top:333.34px;font-size:7.4px;line-height:7.4px;color:#ececec;transform:scaleX(0.836);">SEYMOUR^JANE</div>
<div class="tx" style="left:536px;transform-origin:0 50%;top:341.89px;font-size:7.4px;line-height:7.4px;color:#ececec;transform:scaleX(0.873);">12/5/1963 F</div>
<div class="tx" style="left:536px;transform-origin:0 50%;top:350.44px;font-size:7.4px;line-height:7.4px;color:#ececec;transform:scaleX(0.863);">ID: 234</div>
<div class="tx" style="left:536px;transform-origin:0 50%;top:358.99px;font-size:7.4px;line-height:7.4px;color:#ececec;transform:scaleX(0.847);">Acc: 790</div>
<div class="tx" style="right:18.299999999999955px;transform-origin:100% 50%;top:333.34px;font-size:7.4px;line-height:7.4px;color:#ececec;transform:scaleX(0.878);">10/17/2006</div>
<div class="tx" style="right:18.299999999999955px;transform-origin:100% 50%;top:341.89px;font-size:7.4px;line-height:7.4px;color:#ececec;transform:scaleX(0.890);">Ser: 101</div>
<div class="tx" style="right:18.299999999999955px;transform-origin:100% 50%;top:350.44px;font-size:7.4px;line-height:7.4px;color:#ececec;transform:scaleX(0.831);">Img: 72</div>
<div class="tx" style="left:536px;transform-origin:0 50%;top:584.04px;font-size:7.4px;line-height:7.4px;color:#ececec;transform:scaleX(0.871);">C128 W256 S0.0 U0.0</div>
<div class="tx" style="left:743.33px;transform-origin:50% 50%;top:575.49px;font-size:7.4px;line-height:7.4px;color:#ececec;transform:scaleX(0.863);">3D Color Volume</div>
<div class="tx" style="left:761.02px;transform-origin:50% 50%;top:584.04px;font-size:7.4px;line-height:7.4px;color:#ececec;transform:scaleX(0.778);">HEAD</div>
<div class="tx" style="left:761.32px;transform-origin:50% 50%;top:583.24px;font-size:7.4px;line-height:7.4px;color:#c8c8c8;transform:scaleX(0.730);opacity:.55">HEAD</div>
<div class="tx" style="right:20.199999999999932px;transform-origin:100% 50%;top:567.04px;font-size:7.4px;line-height:7.4px;color:#ececec;transform:scaleX(0.871);">Tech:</div>
<div class="tx" style="right:18.299999999999955px;transform-origin:100% 50%;top:575.54px;font-size:7.4px;line-height:7.4px;color:#ececec;transform:scaleX(0.855);">RamSoft</div>
<div class="tx" style="right:18.299999999999955px;transform-origin:100% 50%;top:584.04px;font-size:7.4px;line-height:7.4px;color:#ececec;transform:scaleX(0.826);">RAMSOFT INC</div>
<div class="tx" style="left:762.10px;transform-origin:50% 50%;top:69.87px;font-size:9.6px;line-height:9.6px;color:#f4f4f4;transform:scaleX(0.958);">S/L</div>
<div class="tx" style="left:765.70px;transform-origin:50% 50%;top:333.27px;font-size:9.6px;line-height:9.6px;color:#f4f4f4;transform:scaleX(0.843);">S</div>
<div class="tx" style="left:639.9px;transform-origin:0 50%;top:194.17px;font-size:9.6px;line-height:9.6px;color:#f4f4f4;transform:scaleX(0.901);">R/P/S</div>
<div class="tx" style="left:879.2px;transform-origin:0 50%;top:193.87px;font-size:9.6px;line-height:9.6px;color:#f4f4f4;transform:scaleX(0.922);">L/A/I</div>
<div class="tx" style="left:639.9px;transform-origin:0 50%;top:458.27px;font-size:9.6px;line-height:9.6px;color:#f4f4f4;transform:scaleX(0.865);">R</div>
<div class="tx" style="left:892.4px;transform-origin:0 50%;top:458.27px;font-size:9.6px;line-height:9.6px;color:#f4f4f4;transform:scaleX(0.862);">L</div>
<svg class="abs" style="left:0;top:0" width="1024" height="616" viewBox="0 0 1024 616"><g font-family="Liberation Sans, sans-serif" font-size="8.4">
<path d="M391.9 242.5L402.6 261.9" stroke="#b4b4b4" stroke-width="0.9" fill="none"/>
<path d="M388.8 257.9L401 251" stroke="#b4b4b4" stroke-width="0.9" fill="none"/>
<text x="388" y="253.6" font-size="5" fill="#4a4a4a">P</text>
<text x="386.7" y="240.4" fill="#d6d6d6">S</text>
<text x="381.59999999999997" y="261.4" fill="#d6d6d6">R</text>
<text x="402.7" y="267.9" fill="#d6d6d6">I</text>
<text x="406.3" y="247.3" fill="#5e5e5e" font-size="8.2">L</text>
<rect x="401.6" y="246.6" width="5" height="5.6" fill="#000"/><text x="400.8" y="252.2" fill="#fafafa" font-size="8.8" stroke="#fafafa" stroke-width="0.25">A</text>
<path d="M873.3 241.6L881.8 263.1" stroke="#b4b4b4" stroke-width="0.9" fill="none"/>
<path d="M867.2 256.5L879.4 252.2" stroke="#b4b4b4" stroke-width="0.9" fill="none"/>
<path d="M886.2 248.7L893.1 248.7" stroke="#b4b4b4" stroke-width="0.9" fill="none"/>
<text x="868.8" y="253.6" font-size="5" fill="#4a4a4a">P</text>
<text x="868.3000000000001" y="239.6" fill="#d6d6d6">S</text>
<text x="859.7" y="259.7" fill="#d6d6d6">R</text>
<text x="881.5" y="268.8" fill="#d6d6d6">I</text>
<text x="887.8" y="248.5" fill="#b0b0b0" font-size="8.2">L</text>
<rect x="880.4" y="247.4" width="5" height="5.6" fill="#000"/><text x="879.5999999999999" y="253" fill="#fafafa" font-size="8.8" stroke="#fafafa" stroke-width="0.25">A</text>
<path d="M394.5 505.4L400.2 527.3" stroke="#b4b4b4" stroke-width="0.9" fill="none"/>
<path d="M386 519.1L396.5 516.1" stroke="#b4b4b4" stroke-width="0.9" fill="none"/>
<path d="M404.2 514.4L409.9 513.8" stroke="#b4b4b4" stroke-width="0.9" fill="none"/>
<text x="391.5" y="516.5" font-size="5" fill="#4a4a4a">P</text>
<text x="390.5" y="503" fill="#d6d6d6">S</text>
<text x="378.59999999999997" y="521.7" fill="#d6d6d6">R</text>
<text x="399.5" y="533.4" fill="#d6d6d6">I</text>
<text x="409.4" y="514.8" fill="#c0c0c0" font-size="8.2">L</text>
<rect x="397.5" y="512.0" width="5" height="5.6" fill="#000"/><text x="396.7" y="517.6" fill="#fafafa" font-size="8.8" stroke="#fafafa" stroke-width="0.25">A</text>
<path d="M875.5 505L878.9 526.9" stroke="#b4b4b4" stroke-width="0.9" fill="none"/>
<path d="M865.6 518L875.7 516.4" stroke="#b4b4b4" stroke-width="0.9" fill="none"/>
<path d="M883 515.6L894.8 515.9" stroke="#b4b4b4" stroke-width="0.9" fill="none"/>
<text x="872" y="517" font-size="5" fill="#4a4a4a">P</text>
<text x="871.9000000000001" y="503" fill="#d6d6d6">S</text>
<text x="858.6" y="520.2" fill="#d6d6d6">R</text>
<text x="877.8000000000001" y="533.4" fill="#d6d6d6">I</text>
<text x="889.4" y="516.4" fill="#b0b0b0" font-size="8.2">L</text>
<rect x="876.5" y="512.6" width="5" height="5.6" fill="#000"/><text x="875.6999999999999" y="518.2" fill="#fafafa" font-size="8.8" stroke="#fafafa" stroke-width="0.25">A</text>
</g></svg>
<div class="abs" style="left:38.500px;top:599.500px;width:1px;height:12px;background:#5a5a5a"></div>
<div class="abs" style="left:312px;top:599.500px;width:1px;height:12px;background:#5a5a5a"></div>
<div class="tx" style="left:44px;transform-origin:0 50%;top:602.37px;font-size:7.6px;line-height:7.6px;color:#e6e6e6;transform:scaleX(1.041);">ADMIN</div>
<div class="tx" style="left:137.5px;transform-origin:0 50%;top:602.37px;font-size:7.6px;line-height:7.6px;color:#e6e6e6;transform:scaleX(0.985);">M1</div>
<div class="tx" style="left:318px;transform-origin:0 50%;top:602.37px;font-size:7.6px;line-height:7.6px;color:#e6e6e6;transform:scaleX(0.981);">DEFAULT</div>
</body></html>
